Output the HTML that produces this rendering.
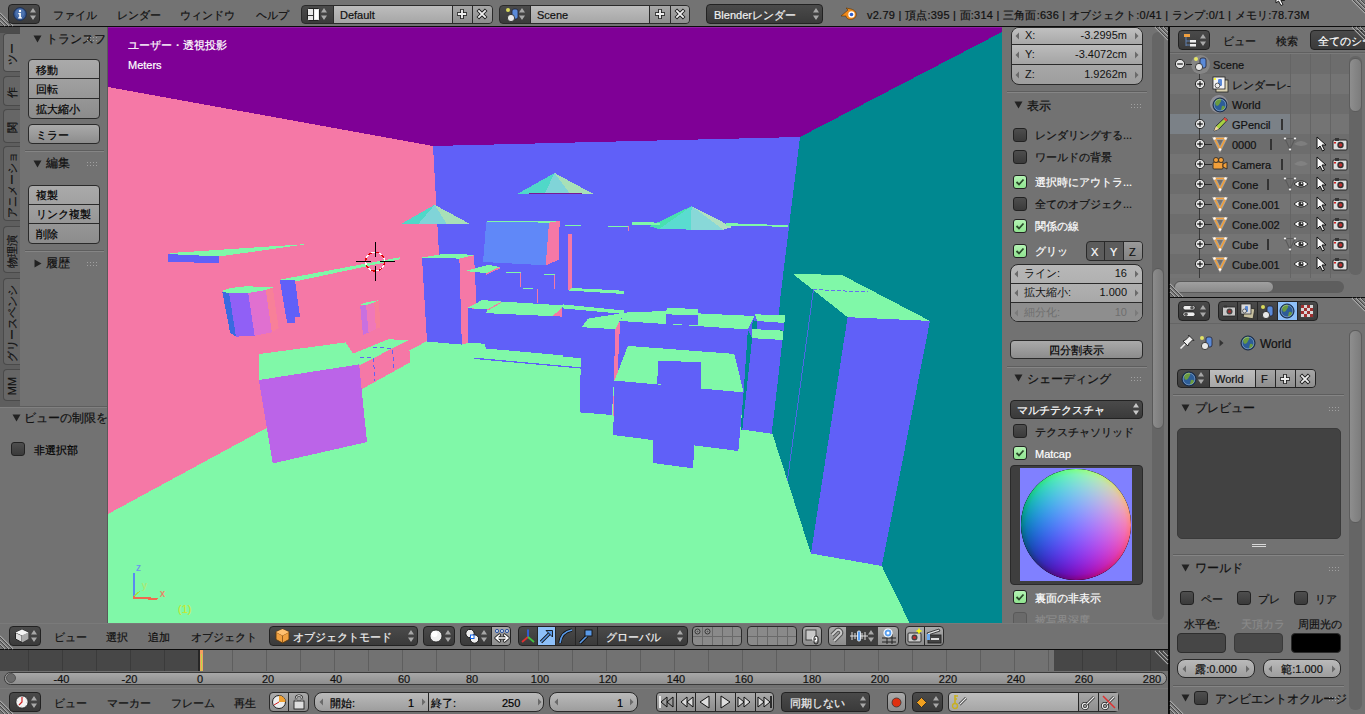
<!DOCTYPE html><html><head><meta charset="utf-8"><style>*{margin:0;padding:0;box-sizing:border-box}
html,body{-webkit-font-smoothing:antialiased;width:1365px;height:714px;overflow:hidden;background:#727272;font-family:"Liberation Sans",sans-serif;font-size:11px;color:#000}
div{position:absolute}
svg{position:absolute;overflow:visible}
.t{white-space:nowrap;line-height:13px;height:13px;margin-top:1px;-webkit-text-stroke:0.2px currentColor}
.w{color:#fff}
.btn{border:1px solid #2a2a2a;border-radius:4px;background:linear-gradient(#aaaaaa,#8c8c8c)}
.dd{border:1px solid #222;border-radius:4px;background:linear-gradient(#4a4a4a,#3a3a3a)}
.num{border:1px solid #2a2a2a;border-radius:8px;background:linear-gradient(#bababa,#9d9d9d)}
.cb{border:1px solid #222;border-radius:3px;background:linear-gradient(#4e4e4e,#3a3a3a);width:14px;height:14px}
.cbon{border:1px solid #222;border-radius:3px;background:linear-gradient(#b4f4b4,#90e490);width:14px;height:14px}
.sep{height:2px;border-top:1px solid #5e5e5e;border-bottom:1px solid #858585}
.dots{width:12px;height:6px;background-image:radial-gradient(circle,#a0a0a0 0.7px,transparent 1px);background-size:3px 3px}
</style></head><body><div class="" style="left:0px;top:0px;width:1365px;height:26px;background:#737373"></div>
<div class="" style="left:0px;top:26px;width:1365px;height:1px;background:#0c0c0c"></div>
<svg style="left:0px;top:13px;" width="13" height="13" viewBox="0 0 13 13"><path d="M0 4 L9 13 M0 8 L5 13 M0 0 L13 13" stroke="#a8a8a8" stroke-width="1.2" fill="none"/><path d="M0 5 L8 13 M0 9 L4 13 M0 1 L12 13" stroke="#3a3a3a" stroke-width="0.8" fill="none"/></svg>
<div class="dd" style="left:8px;top:4px;width:32px;height:20px;"></div>
<svg style="left:13px;top:7px;" width="14" height="14" viewBox="0 0 14 14"><circle cx="7" cy="7" r="6.3" fill="#3a5f9c" stroke="#1b2d52" stroke-width="1"/><circle cx="7" cy="6" r="4.5" fill="#5a80bc" opacity="0.6"/><circle cx="7" cy="4" r="1.2" fill="#fff"/><path d="M5.3 6h2.6v4.2h1v1.2H5.2v-1.2h1v-3h-0.9z" fill="#fff"/></svg>
<svg style="left:29px;top:7px;" width="8" height="14" viewBox="0 0 8 14"><path d="M1 5.5 L4 1 L7 5.5Z M1 8.5 L4 13 L7 8.5Z" fill="#a8a8a8"/></svg>
<div class="t" style="left:53px;top:8px;color:#111">ファイル</div>
<div class="t" style="left:117px;top:8px;color:#111">レンダー</div>
<div class="t" style="left:180px;top:8px;color:#111">ウィンドウ</div>
<div class="t" style="left:256px;top:8px;color:#111">ヘルプ</div>
<div class="" style="left:301px;top:5px;width:192px;height:19px;border:1px solid #2a2a2a;border-radius:4px;background:linear-gradient(#4a4a4a,#3a3a3a)"></div>
<div class="" style="left:333px;top:6px;width:119px;height:17px;background:linear-gradient(#bdbdbd,#a6a6a6);border-left:1px solid #2a2a2a"></div>
<div class="" style="left:452px;top:6px;width:20px;height:17px;background:linear-gradient(#a6a6a6,#8e8e8e);border-left:1px solid #2a2a2a"></div>
<div class="" style="left:472px;top:6px;width:20px;height:17px;background:linear-gradient(#a6a6a6,#8e8e8e);border-left:1px solid #2a2a2a;border-radius:0 3px 3px 0"></div>
<svg style="left:307px;top:8px;" width="13" height="13" viewBox="0 0 13 13"><rect x="0.5" y="0.5" width="12" height="12" rx="1" fill="#e8e8e8" stroke="#222"/><path d="M6.5 1v11 M1 7.5h5.5" stroke="#333" stroke-width="1"/><rect x="8" y="2" width="3" height="9" fill="#fff"/></svg>
<svg style="left:320px;top:7px;" width="8" height="14" viewBox="0 0 8 14"><path d="M1 5.5 L4 1 L7 5.5Z M1 8.5 L4 13 L7 8.5Z" fill="#a8a8a8"/></svg>
<div class="t" style="left:340px;top:8px;color:#111">Default</div>
<svg style="left:456px;top:8px;" width="12" height="12" viewBox="0 0 12 12"><path d="M6 1v10 M1 6h10" stroke="#1a1a1a" stroke-width="3.6"/><path d="M6 1.8v8.4 M1.8 6h8.4" stroke="#eee" stroke-width="1.9"/></svg>
<svg style="left:476px;top:8px;" width="12" height="12" viewBox="0 0 12 12"><path d="M1.8 1.8l8.4 8.4 M10.2 1.8l-8.4 8.4" stroke="#1a1a1a" stroke-width="3.6"/><path d="M2.3 2.3l7.4 7.4 M9.7 2.3l-7.4 7.4" stroke="#eee" stroke-width="1.9"/></svg>
<div class="" style="left:499px;top:5px;width:191px;height:19px;border:1px solid #2a2a2a;border-radius:4px;background:linear-gradient(#4a4a4a,#3a3a3a)"></div>
<div class="" style="left:530px;top:6px;width:119px;height:17px;background:linear-gradient(#bdbdbd,#a6a6a6);border-left:1px solid #2a2a2a"></div>
<div class="" style="left:649px;top:6px;width:21px;height:17px;background:linear-gradient(#a6a6a6,#8e8e8e);border-left:1px solid #2a2a2a"></div>
<div class="" style="left:670px;top:6px;width:19px;height:17px;background:linear-gradient(#a6a6a6,#8e8e8e);border-left:1px solid #2a2a2a;border-radius:0 3px 3px 0"></div>
<svg style="left:505px;top:7px;" width="16" height="16" viewBox="0 0 16 16"><circle cx="3" cy="3" r="2" fill="#ffff60" opacity="0.8"/><rect x="7" y="2" width="6" height="10" rx="2" fill="#5a8ad8" stroke="#223" stroke-width="0.8"/><circle cx="6" cy="11" r="3.6" fill="#e8e8e8" stroke="#222" stroke-width="0.8"/></svg>
<svg style="left:518px;top:7px;" width="8" height="14" viewBox="0 0 8 14"><path d="M1 5.5 L4 1 L7 5.5Z M1 8.5 L4 13 L7 8.5Z" fill="#a8a8a8"/></svg>
<div class="t" style="left:537px;top:8px;color:#111">Scene</div>
<svg style="left:654px;top:8px;" width="12" height="12" viewBox="0 0 12 12"><path d="M6 1v10 M1 6h10" stroke="#1a1a1a" stroke-width="3.6"/><path d="M6 1.8v8.4 M1.8 6h8.4" stroke="#eee" stroke-width="1.9"/></svg>
<svg style="left:674px;top:8px;" width="12" height="12" viewBox="0 0 12 12"><path d="M1.8 1.8l8.4 8.4 M10.2 1.8l-8.4 8.4" stroke="#1a1a1a" stroke-width="3.6"/><path d="M2.3 2.3l7.4 7.4 M9.7 2.3l-7.4 7.4" stroke="#eee" stroke-width="1.9"/></svg>
<div class="dd" style="left:706px;top:4px;width:117px;height:20px;"></div>
<div class="t" style="left:714px;top:8px;color:#f0f0f0">Blenderレンダー</div>
<svg style="left:812px;top:7px;" width="8" height="14" viewBox="0 0 8 14"><path d="M1 5.5 L4 1 L7 5.5Z M1 8.5 L4 13 L7 8.5Z" fill="#a8a8a8"/></svg>
<svg style="left:840px;top:7px;" width="18" height="14" viewBox="0 0 18 14"><path d="M1 9 L8 3 L6 1 L11 2 C15 3 17 6 16 9 C15 12 11 13 8 12 C6 11 6 9 6 9 Z" fill="#f08a1c" stroke="#5a3000" stroke-width="0.6"/><circle cx="11.5" cy="7.5" r="3.2" fill="#fff"/><circle cx="11.5" cy="7.5" r="1.8" fill="#2e5ec8"/></svg>
<div class="t" style="left:867px;top:8px;color:#111;letter-spacing:0.25px">v2.79 | 頂点:395 | 面:314 | 三角面:636 | オブジェクト:0/41 | ランプ:0/1 | メモリ:78.73M</div>
<svg style="left:1352px;top:0px;" width="13" height="13" viewBox="0 0 13 13"><path d="M13 9 L4 0 M13 5 L8 0 M13 13 L0 0" stroke="#a8a8a8" stroke-width="1.2" fill="none"/><path d="M13 8 L5 0 M13 4 L9 0 M13 12 L1 0" stroke="#3a3a3a" stroke-width="0.8" fill="none"/></svg>
<svg style="left:1275px;top:0px;" width="14" height="6" viewBox="0 0 14 6"><path d="M1 -6 L1 3 L3.5 1 L6 5.5 L8 4.5 L5.8 0.5 L9.5 0.5Z" fill="#fff" stroke="#111" stroke-width="0.9"/></svg>
<div class="" style="left:0px;top:27px;width:108px;height:596px;background:#727272"></div>
<div class="" style="left:0px;top:27px;width:20px;height:380px;background:#5e5e5e"></div>
<div class="" style="left:0px;top:27px;width:20px;height:6px;background:#4c4c4c"></div>
<div class="" style="left:107px;top:27px;width:1px;height:596px;background:#5a5a5a"></div>
<div class="" style="left:3px;top:33px;width:17px;height:39px;background:#747474;border:1px solid #4a4a4a;border-right:none;border-radius:4px 0 0 4px"></div>
<div class="t" style="left:11.5px;top:52.5px;transform:translate(-50%,-50%) rotate(-90deg);color:#111;font-size:11px">ツー</div>
<div class="" style="left:3px;top:76px;width:17px;height:30px;background:#666666;border:1px solid #4a4a4a;border-right:none;border-radius:4px 0 0 4px"></div>
<div class="t" style="left:11.5px;top:91.0px;transform:translate(-50%,-50%) rotate(-90deg);color:#111;font-size:11px">作</div>
<div class="" style="left:3px;top:109px;width:17px;height:34px;background:#666666;border:1px solid #4a4a4a;border-right:none;border-radius:4px 0 0 4px"></div>
<div class="t" style="left:11.5px;top:126.0px;transform:translate(-50%,-50%) rotate(-90deg);color:#111;font-size:11px">関</div>
<div class="" style="left:3px;top:146px;width:17px;height:75px;background:#666666;border:1px solid #4a4a4a;border-right:none;border-radius:4px 0 0 4px"></div>
<div class="t" style="left:11.5px;top:183.5px;transform:translate(-50%,-50%) rotate(-90deg);color:#111;font-size:11px">アニメーショ</div>
<div class="" style="left:3px;top:226px;width:17px;height:47px;background:#666666;border:1px solid #4a4a4a;border-right:none;border-radius:4px 0 0 4px"></div>
<div class="t" style="left:11.5px;top:249.5px;transform:translate(-50%,-50%) rotate(-90deg);color:#111;font-size:11px">物理演</div>
<div class="" style="left:3px;top:278px;width:17px;height:87px;background:#666666;border:1px solid #4a4a4a;border-right:none;border-radius:4px 0 0 4px"></div>
<div class="t" style="left:11.5px;top:321.5px;transform:translate(-50%,-50%) rotate(-90deg);color:#111;font-size:11px">グリースペンシ</div>
<div class="" style="left:3px;top:369px;width:17px;height:32px;background:#666666;border:1px solid #4a4a4a;border-right:none;border-radius:4px 0 0 4px"></div>
<div class="t" style="left:11.5px;top:385.0px;transform:translate(-50%,-50%) rotate(-90deg);color:#111;font-size:11px">MM</div>
<svg style="left:33px;top:35px;" width="9" height="8" viewBox="0 0 9 8"><path d="M0.5 0.5 L8.5 0.5 L4.5 7.5Z" fill="#222"/></svg>
<div class="t" style="left:46px;top:32px;color:#111;font-size:12px">トランスフ</div>
<div class="dots" style="left:86px;top:36px"></div>
<div class="btn" style="left:28px;top:59px;width:72px;height:60px;"></div>
<div class="" style="left:29px;top:78px;width:70px;height:1px;background:#2a2a2a"></div>
<div class="" style="left:29px;top:98px;width:70px;height:1px;background:#2a2a2a"></div>
<div class="t" style="left:36px;top:63px;">移動</div>
<div class="t" style="left:36px;top:82px;">回転</div>
<div class="t" style="left:36px;top:102px;">拡大縮小</div>
<div class="btn" style="left:28px;top:124px;width:72px;height:20px;"></div>
<div class="t" style="left:36px;top:128px;">ミラー</div>
<div class="sep" style="left:25px;top:150px;width:79px;height:2px;"></div>
<svg style="left:33px;top:160px;" width="9" height="8" viewBox="0 0 9 8"><path d="M0.5 0.5 L8.5 0.5 L4.5 7.5Z" fill="#222"/></svg>
<div class="t" style="left:46px;top:156px;color:#111;font-size:12px">編集</div>
<div class="dots" style="left:86px;top:161px"></div>
<div class="btn" style="left:28px;top:185px;width:72px;height:59px;"></div>
<div class="" style="left:29px;top:204px;width:70px;height:1px;background:#2a2a2a"></div>
<div class="" style="left:29px;top:223px;width:70px;height:1px;background:#2a2a2a"></div>
<div class="t" style="left:36px;top:188px;">複製</div>
<div class="t" style="left:36px;top:207px;">リンク複製</div>
<div class="t" style="left:36px;top:227px;">削除</div>
<div class="sep" style="left:25px;top:250px;width:79px;height:2px;"></div>
<svg style="left:34px;top:259px;" width="8" height="9" viewBox="0 0 8 9"><path d="M0.5 0.5 L7.5 4.5 L0.5 8.5Z" fill="#222"/></svg>
<div class="t" style="left:46px;top:256px;color:#111;font-size:12px">履歴</div>
<div class="dots" style="left:86px;top:261px"></div>
<div class="" style="left:0px;top:406px;width:107px;height:1px;background:#5e5e5e"></div>
<div class="" style="left:0px;top:407px;width:107px;height:1px;background:#808080"></div>
<svg style="left:12px;top:414px;" width="9" height="8" viewBox="0 0 9 8"><path d="M0.5 0.5 L8.5 0.5 L4.5 7.5Z" fill="#222"/></svg>
<div class="t" style="left:24px;top:411px;color:#111;font-size:12px">ビューの制限を</div>
<div class="cb" style="left:11px;top:442px;width:14px;height:14px;"></div>
<div class="t" style="left:34px;top:443px;">非選択部</div>
<svg style="left:0px;top:0px;" width="1365" height="714" viewBox="0 0 1365 714"><defs><clipPath id="vc"><rect x="108" y="27" width="894" height="596"/></clipPath></defs><g clip-path="url(#vc)" shape-rendering="crispEdges"><polygon points="108,27 1002,27 1002,32 800,137 433,146 108,87" fill="#7f0096" /><polygon points="108,87 433,146 444,343 108,514" fill="#f578a6" /><polygon points="433,146 800,137 780,300 772,432 620,345 444,343" fill="#6060f8" /><polygon points="800,137 1002,32 1002,623 909.6,623 881.8,566 810.9,553.5 771.5,431 780,300" fill="#008890" /><polygon points="108,514 427,341 620,345 771.5,431 810.9,553.5 881.8,566 909.6,623 108,623" fill="#80f8a8" /><polygon points="434.7,204.8 401,224 418,224.3" fill="#50d8c8" /><polygon points="434.7,204.8 418,224.3 447,224.3" fill="#80d4d8" /><polygon points="434.7,204.8 447,224.3 470,224" fill="#a8e0b8" /><polygon points="554.6,173 518,193.6 544.5,193.9" fill="#50d8c8" /><polygon points="554.6,173 544.5,193.9 570.3,193.9" fill="#80d4d8" /><polygon points="554.6,173 570.3,193.9 592.7,193.6" fill="#a8e0b8" /><polygon points="691.6,206.1 649.4,226.4 659.3,229" fill="#48e0b0" /><polygon points="691.6,206.1 659.3,229 691,229.6" fill="#5adcd0" /><polygon points="691.6,206.1 691,229.6 723.2,229.6" fill="#88d8d8" /><polygon points="691.6,206.1 723.2,229.6 732.6,227.2" fill="#b0e0c0" /><polygon points="632,222.2 660,222.6 660,224.9 632,224.9" fill="#80f8a8" /><polygon points="725.6,223.1 787.7,225.2 787.7,226.8 725.6,225.6" fill="#80f8a8" /><polygon points="490,220.5 559.6,220.8 549,222.7 486.3,221.6" fill="#80f8a8" /><polygon points="486.3,221.6 549,222.7 545.7,265.3 483,262" fill="#6088f8" /><polygon points="549,222.7 559.6,221 559,259.7 545.7,265.3" fill="#f578a6" /><polygon points="568.2,234 571.8,234 571.8,288 568.2,290.5" fill="#f578a6" /><polygon points="568.7,290.5 571.8,288 578,288.3 598.5,289.3 624.1,290.8 624.1,293.9 617,293.6 598.5,292.4" fill="#80f8a8" /><polygon points="422,257.5 442.6,254 471.7,254.6 474,255.2 459.4,258.6" fill="#80f8a8" /><polygon points="459.4,258.6 474,255.2 477.3,320 477,341 461.8,344.6" fill="#f578a6" /><polygon points="422,257.5 459.4,258.6 461.8,344.6 427,341.5" fill="#6060f8" /><polygon points="465,271 488.5,264.9 499.7,267 486.3,273.2" fill="#80f8a8" /><polygon points="486.3,273.2 499.7,267 499.7,268.5 486.3,274.8" fill="#f578a6" /><polygon points="564.5,224.6 581,224.9 581,226 564.5,225.7" fill="#80f8a8" /><polygon points="529,193.2 582,193.2 582,194.2 529,194.2" fill="#7a1a90" /><polygon points="506.2,271.8 520.5,271.8 520.5,273 506.2,273" fill="#80f8a8" /><polygon points="520,273 521,273 521,287 520,287" fill="#f578a6" /><polygon points="544.1,273.8 555,273.8 555,275 544.1,275" fill="#80f8a8" /><polygon points="554,275 555,275 555,289 554,289" fill="#f578a6" /><polygon points="523,288 533,288 533,289.2 523,289.2" fill="#80f8a8" /><polygon points="537,289 538,289 538,302.8 537,302.8" fill="#f578a6" /><polygon points="608.4,225.6 628.6,226.2 628.6,227.4 608.4,226.8" fill="#80f8a8" /><polygon points="628,226 629,226 629,230.6 628,230.6" fill="#f578a6" /><polygon points="563,305 624,311 623,360 563,357" fill="#6060f8" /><polygon points="563,304.4 624,310.5 624,314 563,308.4" fill="#80f8a8" /><polygon points="467.5,308.1 561.8,316.6 581,321 581,357 486.3,348.5 484.3,343.8 468.2,342.5" fill="#6060f8" /><polygon points="467.7,307.7 482.3,300 500.8,301.5 563.8,305.4 561.5,308.5 553,316.2 485.4,313.1 488.5,309.2 467.7,308.2" fill="#80f8a8" /><polygon points="487.5,309.5 500.5,302 501.2,302.8 488.5,310.2" fill="#f578a6" /><polygon points="552.6,316 561.8,308.1 561.8,316.6" fill="#f578a6" /><polygon points="473.7,357.6 580.6,367.3 580.6,368.6 473.7,358.9" fill="#6060f8" /><polygon points="581.3,316.6 617.2,321.9 611.9,415 580,412.4" fill="#6060f8" /><polygon points="581.6,327.2 588.2,318.6 625.1,312.7 619.2,321.9 615.2,329.2" fill="#80f8a8" /><polygon points="615.2,329.2 619.8,321 618,415 613,416" fill="#f578a6" /><polygon points="620.2,321 625.2,312.6 666.4,310.9 667.2,307.6 698.3,309.2 698.3,313.4 754.6,316 747.9,329.4" fill="#80f8a8" /><polygon points="620.2,321 747.9,329.4 743.6,392 617.2,380" fill="#6060f8" /><polygon points="666.4,314.3 698.3,315.5 698.3,325.5 666.4,323.5" fill="#6060f8" /><polygon points="627.9,345.9 734.3,353.9 743.6,392.4 614.5,380.5" fill="#80f8a8" /><polygon points="614.5,380.5 743.6,392.4 738.3,451 613.2,435" fill="#6060f8" /><polygon points="658.5,360.5 701,362.4 701,390 657,384" fill="#6060f8" /><polygon points="653,435 694.4,445 693,468.3 653,463" fill="#6060f8" /><polygon points="747.9,329.4 752.2,338.2 742.6,430 740.5,430 743.6,392" fill="#008890" /><polygon points="752.9,320.3 757.1,321 757,328.7 751.5,329" fill="#008890" /><polygon points="755,314.4 786.5,315 785.8,323.1 757.1,321" fill="#80f8a8" /><polygon points="757.1,321 785.8,323.1 785.8,330.8 757.1,328.7" fill="#6060f8" /><polygon points="751.5,329 785.1,330.8 783.7,340 752.2,338.2" fill="#80f8a8" /><polygon points="752.2,338.2 783.7,340 771.5,433.7 742.3,429.5" fill="#6060f8" /><polygon points="792.5,273.6 842.4,275.2 930,320.9 847.6,317.2" fill="#80f8a8" /><polygon points="792.5,273.6 847.6,317.2 810.9,553.5 772,432 787,300" fill="#008890" /><polygon points="847.6,317.2 930,320.9 881.8,566 810.9,553.5" fill="#6060f8" /><line x1="813.5" y1="289.4" x2="787.3" y2="481" stroke="#6060f8" stroke-width="0.8"/><line x1="813.5" y1="289.6" x2="868" y2="292" stroke="#6060f8" stroke-width="0.9" stroke-dasharray="4 2"/><polygon points="174,252.8 307.5,244 219.3,256.5 167.6,254" fill="#80f8a8" /><polygon points="167.6,254 219.3,256.5 219.3,263.4 167.6,261.6" fill="#6060f8" /><polygon points="279.8,279.7 399.6,257.3 399.6,259.3 295,281.5" fill="#80f8a8" /><polygon points="279.8,279.7 295,280 300,317 295,317 295,322.8 287.4,322.8 286,317" fill="#6060f8" /><polygon points="221.8,291.1 229.6,288.1 246.3,286.2 272.7,287.5 265.9,290.1 248.2,293 226.2,293" fill="#80f8a8" /><polygon points="222.3,292 229.1,293 236,336.7 230.1,332.7" fill="#3a6ae0" /><polygon points="229.1,293 248.2,293 254.6,335.7 236,336.7" fill="#9060f6" /><polygon points="248.2,293 265.9,290.1 271.8,332.3 254.6,335.7" fill="#e070d0" /><polygon points="265.9,290.1 272.7,287.5 278.6,327.8 271.8,332.3" fill="#f88098" /><polygon points="360.2,305 366.1,302.3 378.7,300.2 374.2,302.3 366.1,305" fill="#80f8a8" /><polygon points="360.2,306.1 366.1,305 368.6,332.7 363,334.8" fill="#c870e0" /><polygon points="366.1,305 374.2,302.3 375.9,329.2 368.6,332.7" fill="#f078b8" /><polygon points="374.2,302.3 378.7,300.2 380.5,327.1 375.9,329.2" fill="#f88098" /><polygon points="354.6,355.9 388.2,339.7 407.3,340.6 409.5,351.4 409.5,362.6 361.3,389.5 359.1,364.4" fill="#f578a6" /><polygon points="352.2,354 388.7,339.1 407.8,340.5 359.1,365.5" fill="#80f8a8" /><g stroke="#6060f8" stroke-width="1" stroke-dasharray="4 3" fill="none"><path d="M360 357.3 L373.7 358.2 L374.5 381 M373.2 347.7 L392.8 348.2 L393.5 370"/></g><polygon points="258.9,354.1 345.7,342.4 354.6,355.9 359.1,364.4 258.9,380" fill="#80f8a8" /><polygon points="258.9,380 359.1,364.4 367,442.1 272.8,463.4" fill="#bb64e8" /><circle cx="375.1" cy="261.6" r="9.5" fill="none" stroke="#fff" stroke-width="1.3"/><circle cx="375.1" cy="261.6" r="9.5" fill="none" stroke="#e00000" stroke-width="1.3" stroke-dasharray="3.7 3.7"/><line x1="375.1" y1="242" x2="375.1" y2="257" stroke="#000" stroke-width="1.2"/><line x1="375.1" y1="266" x2="375.1" y2="281" stroke="#000" stroke-width="1.2"/><line x1="355.5" y1="261.6" x2="370.5" y2="261.6" stroke="#000" stroke-width="1.2"/><line x1="379.7" y1="261.6" x2="394.7" y2="261.6" stroke="#000" stroke-width="1.2"/><line x1="134" y1="573" x2="134" y2="597" stroke="#5a8af0" stroke-width="2"/><line x1="133" y1="597.5" x2="157.5" y2="599" stroke="#f06a50" stroke-width="2.2"/><line x1="134.5" y1="596" x2="140" y2="591" stroke="#a0e040" stroke-width="1.2"/></g></svg>
<div class="t" style="left:136px;top:560px;color:#6a90f0;font-size:10px">z</div>
<div class="t" style="left:142px;top:578px;color:#b0e870;font-size:10px">y</div>
<div class="t" style="left:160px;top:586px;color:#f07a60;font-size:10px">x</div>
<div class="t" style="left:178px;top:601.5px;color:#c8e830;font-size:11px">(1)</div>
<div class="t" style="left:128px;top:38px;color:#fff">ユーザー・透視投影</div>
<div class="t" style="left:128px;top:58px;color:#fff">Meters</div>
<div class="" style="left:108px;top:27px;width:894px;height:1px;background:rgba(255,255,255,0.12)"></div>
<div class="" style="left:1002px;top:27px;width:166px;height:596px;background:#727272"></div>
<div class="" style="left:1152px;top:32px;width:12px;height:588px;background:#656565;border-radius:6px"></div>
<div class="" style="left:1152px;top:268px;width:12px;height:161px;background:linear-gradient(90deg,#8c8c8c,#7a7a7a);border-radius:6px;border:1px solid #5a5a5a"></div>
<svg style="left:1155px;top:27px;" width="13" height="13" viewBox="0 0 13 13"><path d="M13 9 L4 0 M13 5 L8 0 M13 13 L0 0" stroke="#a8a8a8" stroke-width="1.2" fill="none"/><path d="M13 8 L5 0 M13 4 L9 0 M13 12 L1 0" stroke="#3a3a3a" stroke-width="0.8" fill="none"/></svg>
<div class="" style="left:1011px;top:27px;width:132px;height:58px;border:1px solid #2a2a2a;border-radius:8px;background:linear-gradient(#bababa,#9e9e9e)"></div>
<div class="" style="left:1012px;top:44px;width:130px;height:1px;background:#2a2a2a"></div>
<div class="" style="left:1012px;top:64px;width:130px;height:1px;background:#2a2a2a"></div>
<div class="" style="left:1012px;top:28px;width:130px;height:16px;background:linear-gradient(#c0c0c0,#a8a8a8);border-radius:7px 7px 0 0"></div>
<div class="" style="left:1012px;top:45px;width:130px;height:19px;background:linear-gradient(#bcbcbc,#a4a4a4)"></div>
<div style="left:1011px;top:27px;width:132px;height:17px;line-height:17px;color:#111;padding:0 14px"><span style="position:absolute;left:14px">X:</span><span style="position:absolute;right:16px">-3.2995m</span></div>
<svg style="left:1015px;top:31.5px;" width="5" height="8" viewBox="0 0 5 8"><path d="M4 0.5 L0.5 4 L4 7.5Z" fill="#6a6a6a"/></svg>
<svg style="left:1134px;top:31.5px;" width="5" height="8" viewBox="0 0 5 8"><path d="M1 0.5 L4.5 4 L1 7.5Z" fill="#6a6a6a"/></svg>
<div style="left:1011px;top:45px;width:132px;height:19px;line-height:19px;color:#111;padding:0 14px"><span style="position:absolute;left:14px">Y:</span><span style="position:absolute;right:16px">-3.4072cm</span></div>
<svg style="left:1015px;top:50.5px;" width="5" height="8" viewBox="0 0 5 8"><path d="M4 0.5 L0.5 4 L4 7.5Z" fill="#6a6a6a"/></svg>
<svg style="left:1134px;top:50.5px;" width="5" height="8" viewBox="0 0 5 8"><path d="M1 0.5 L4.5 4 L1 7.5Z" fill="#6a6a6a"/></svg>
<div style="left:1011px;top:65px;width:132px;height:19px;line-height:19px;color:#111;padding:0 14px"><span style="position:absolute;left:14px">Z:</span><span style="position:absolute;right:16px">1.9262m</span></div>
<svg style="left:1015px;top:70.5px;" width="5" height="8" viewBox="0 0 5 8"><path d="M4 0.5 L0.5 4 L4 7.5Z" fill="#6a6a6a"/></svg>
<svg style="left:1134px;top:70.5px;" width="5" height="8" viewBox="0 0 5 8"><path d="M1 0.5 L4.5 4 L1 7.5Z" fill="#6a6a6a"/></svg>
<div class="sep" style="left:1007px;top:91px;width:140px;height:2px;"></div>
<svg style="left:1014px;top:101px;" width="9" height="8" viewBox="0 0 9 8"><path d="M0.5 0.5 L8.5 0.5 L4.5 7.5Z" fill="#222"/></svg>
<div class="t" style="left:1027px;top:99px;color:#111;font-size:12px">表示</div>
<div class="dots" style="left:1130px;top:103px"></div>
<div class="cb" style="left:1013px;top:128px;width:14px;height:14px;"></div>
<div class="t" style="left:1035px;top:128px;color:#111">レンダリングする...</div>
<div class="cb" style="left:1013px;top:150px;width:14px;height:14px;"></div>
<div class="t" style="left:1035px;top:150px;color:#111">ワールドの背景</div>
<div class="cbon" style="left:1013px;top:175px;width:14px;height:14px;"></div>
<svg style="left:1015px;top:177px;" width="10" height="10" viewBox="0 0 10 10"><path d="M1.5 5 L4 7.5 L8.5 2.5" stroke="#2a4a2a" stroke-width="1.8" fill="none"/></svg>
<div class="t" style="left:1035px;top:175px;color:#fff">選択時にアウトラ...</div>
<div class="cb" style="left:1013px;top:197px;width:14px;height:14px;"></div>
<div class="t" style="left:1035px;top:197px;color:#111">全てのオブジェク...</div>
<div class="cbon" style="left:1013px;top:219px;width:14px;height:14px;"></div>
<svg style="left:1015px;top:221px;" width="10" height="10" viewBox="0 0 10 10"><path d="M1.5 5 L4 7.5 L8.5 2.5" stroke="#2a4a2a" stroke-width="1.8" fill="none"/></svg>
<div class="t" style="left:1035px;top:219px;color:#fff">関係の線</div>
<div class="cbon" style="left:1013px;top:244px;width:14px;height:14px;"></div>
<svg style="left:1015px;top:246px;" width="10" height="10" viewBox="0 0 10 10"><path d="M1.5 5 L4 7.5 L8.5 2.5" stroke="#2a4a2a" stroke-width="1.8" fill="none"/></svg>
<div class="t" style="left:1035px;top:244px;color:#fff">グリッ</div>
<div class="" style="left:1086px;top:241px;width:57px;height:20px;border:1px solid #2a2a2a;border-radius:4px;background:#5c5c5c;overflow:hidden"></div>
<div class="" style="left:1104px;top:242px;width:1px;height:18px;background:#2a2a2a"></div>
<div class="" style="left:1123px;top:242px;width:1px;height:18px;background:#2a2a2a"></div>
<div class="" style="left:1124px;top:242px;width:18px;height:18px;background:linear-gradient(#9a9a9a,#828282);border-radius:0 3px 3px 0"></div>
<div class="t" style="left:1091px;top:245px;color:#fff">X</div>
<div class="t" style="left:1110px;top:245px;color:#fff">Y</div>
<div class="t" style="left:1129px;top:245px;color:#111">Z</div>
<div class="" style="left:1010px;top:264px;width:133px;height:58px;border:1px solid #2a2a2a;border-radius:8px;background:linear-gradient(#b8b8b8,#a0a0a0)"></div>
<div class="" style="left:1011px;top:283px;width:131px;height:1px;background:#2a2a2a"></div>
<div class="" style="left:1011px;top:302px;width:131px;height:1px;background:#2a2a2a"></div>
<div class="" style="left:1011px;top:303px;width:131px;height:18px;background:#8e8e8e;border-radius:0 0 7px 7px"></div>
<div style="left:1010px;top:264px;width:133px;height:19px;line-height:19px;color:#111;padding:0 14px"><span style="position:absolute;left:14px">ライン:</span><span style="position:absolute;right:16px">16</span></div>
<svg style="left:1014px;top:269.5px;" width="5" height="8" viewBox="0 0 5 8"><path d="M4 0.5 L0.5 4 L4 7.5Z" fill="#6a6a6a"/></svg>
<svg style="left:1134px;top:269.5px;" width="5" height="8" viewBox="0 0 5 8"><path d="M1 0.5 L4.5 4 L1 7.5Z" fill="#6a6a6a"/></svg>
<div style="left:1010px;top:283px;width:133px;height:19px;line-height:19px;color:#111;padding:0 14px"><span style="position:absolute;left:14px">拡大縮小:</span><span style="position:absolute;right:16px">1.000</span></div>
<svg style="left:1014px;top:288.5px;" width="5" height="8" viewBox="0 0 5 8"><path d="M4 0.5 L0.5 4 L4 7.5Z" fill="#6a6a6a"/></svg>
<svg style="left:1134px;top:288.5px;" width="5" height="8" viewBox="0 0 5 8"><path d="M1 0.5 L4.5 4 L1 7.5Z" fill="#6a6a6a"/></svg>
<div style="left:1010px;top:303px;width:133px;height:19px;line-height:19px;color:#6e6e6e;padding:0 14px"><span style="position:absolute;left:14px">細分化:</span><span style="position:absolute;right:16px">10</span></div>
<svg style="left:1014px;top:308.5px;" width="5" height="8" viewBox="0 0 5 8"><path d="M4 0.5 L0.5 4 L4 7.5Z" fill="#7a7a7a"/></svg>
<svg style="left:1134px;top:308.5px;" width="5" height="8" viewBox="0 0 5 8"><path d="M1 0.5 L4.5 4 L1 7.5Z" fill="#7a7a7a"/></svg>
<div class="btn" style="left:1010px;top:340px;width:133px;height:19px;"></div>
<div class="t" style="left:1010px;top:343px;width:133px;text-align:center">四分割表示</div>
<div class="sep" style="left:1007px;top:366px;width:140px;height:2px;"></div>
<svg style="left:1014px;top:374px;" width="9" height="8" viewBox="0 0 9 8"><path d="M0.5 0.5 L8.5 0.5 L4.5 7.5Z" fill="#222"/></svg>
<div class="t" style="left:1027px;top:372px;color:#111;font-size:12px">シェーディング</div>
<div class="dots" style="left:1130px;top:376px"></div>
<div class="dd" style="left:1010px;top:400px;width:133px;height:19px;"></div>
<div class="t" style="left:1017px;top:403px;color:#fff">マルチテクスチャ</div>
<svg style="left:1132px;top:402px;" width="8" height="14" viewBox="0 0 8 14"><path d="M1 5.5 L4 1 L7 5.5Z M1 8.5 L4 13 L7 8.5Z" fill="#c8c8c8"/></svg>
<div class="cb" style="left:1013px;top:424px;width:14px;height:14px;"></div>
<div class="t" style="left:1035px;top:425px;color:#111">テクスチャソリッド</div>
<div class="cbon" style="left:1013px;top:446px;width:14px;height:14px;"></div>
<svg style="left:1015px;top:448px;" width="10" height="10" viewBox="0 0 10 10"><path d="M1.5 5 L4 7.5 L8.5 2.5" stroke="#2a4a2a" stroke-width="1.8" fill="none"/></svg>
<div class="t" style="left:1035px;top:447px;color:#fff">Matcap</div>
<div class="" style="left:1010px;top:465px;width:133px;height:120px;background:#3e3e3e;border:1px solid #2a2a2a;border-radius:4px"></div>
<div class="" style="left:1020px;top:468px;width:112px;height:113px;background:#8080ff"></div>
<div style="left:1021px;top:469px;width:110px;height:111px;isolation:isolate;border-radius:50%;overflow:hidden"><div style="left:0;top:0;width:110px;height:111px;background:radial-gradient(closest-side,rgb(0,0,255) 0%,rgb(0,0,254) 10%,rgb(0,0,252) 20%,rgb(0,0,249) 30%,rgb(0,0,244) 40%,rgb(0,0,238) 50%,rgb(0,0,230) 60%,rgb(0,0,219) 70%,rgb(0,0,204) 80%,rgb(0,0,183) 90%,rgb(0,0,128) 100%)"></div><div style="left:0;top:0;width:110px;height:111px;background:linear-gradient(90deg,rgb(1,0,0),rgb(255,0,0));mix-blend-mode:lighten"></div><div style="left:0;top:0;width:110px;height:111px;background:linear-gradient(180deg,rgb(0,255,0),rgb(0,1,0));mix-blend-mode:lighten"></div></div>
<div class="cbon" style="left:1013px;top:590px;width:14px;height:14px;"></div>
<svg style="left:1015px;top:592px;" width="10" height="10" viewBox="0 0 10 10"><path d="M1.5 5 L4 7.5 L8.5 2.5" stroke="#2a4a2a" stroke-width="1.8" fill="none"/></svg>
<div class="t" style="left:1035px;top:591px;color:#fff">裏面の非表示</div>
<div class="" style="left:1013px;top:612px;width:14px;height:14px;border:1px solid #5a5a5a;border-radius:3px;background:#6a6a6a"></div>
<div class="t" style="left:1035px;top:613px;color:#8c8c8c">被写界深度</div>
<div class="" style="left:1168px;top:27px;width:2px;height:687px;background:#0c0c0c"></div>
<div class="" style="left:1170px;top:27px;width:195px;height:270px;background:#727272"></div>
<div class="" style="left:1170px;top:52px;width:195px;height:1px;background:#606060"></div>
<div class="" style="left:1170px;top:53px;width:195px;height:1px;background:#7a7a7a"></div>
<div class="" style="left:1170px;top:54px;width:180px;height:20px;background:#6d6d6d"></div>
<div class="" style="left:1170px;top:74px;width:180px;height:20px;background:#747474"></div>
<div class="" style="left:1170px;top:94px;width:180px;height:20px;background:#6d6d6d"></div>
<div class="" style="left:1170px;top:114px;width:180px;height:20px;background:#747474"></div>
<div class="" style="left:1170px;top:134px;width:180px;height:20px;background:#6d6d6d"></div>
<div class="" style="left:1170px;top:154px;width:180px;height:20px;background:#747474"></div>
<div class="" style="left:1170px;top:174px;width:180px;height:20px;background:#6d6d6d"></div>
<div class="" style="left:1170px;top:194px;width:180px;height:20px;background:#747474"></div>
<div class="" style="left:1170px;top:214px;width:180px;height:20px;background:#6d6d6d"></div>
<div class="" style="left:1170px;top:234px;width:180px;height:20px;background:#747474"></div>
<div class="" style="left:1170px;top:254px;width:180px;height:20px;background:#6d6d6d"></div>
<div class="" style="left:1170px;top:274px;width:180px;height:20px;background:#747474"></div>
<div class="" style="left:1170px;top:114px;width:121px;height:20px;background:#7b8187"></div>
<div class="" style="left:1290px;top:54px;width:1px;height:226px;background:#656565"></div>
<div class="" style="left:1310px;top:54px;width:1px;height:226px;background:#656565"></div>
<div class="" style="left:1330px;top:54px;width:1px;height:226px;background:#656565"></div>
<div class="dd" style="left:1178px;top:30px;width:32px;height:20px;"></div>
<svg style="left:1183px;top:33px;" width="16" height="14" viewBox="0 0 16 14"><rect x="1" y="1" width="6" height="3" fill="#f0a040"/><path d="M3 4v9 M3 8h4 M3 12h4" stroke="#6080b0" stroke-width="1"/><rect x="7" y="7" width="6" height="2.5" fill="#eee"/><rect x="7" y="11" width="6" height="2.5" fill="#eee"/></svg>
<svg style="left:1199px;top:33px;" width="8" height="14" viewBox="0 0 8 14"><path d="M1 5.5 L4 1 L7 5.5Z M1 8.5 L4 13 L7 8.5Z" fill="#a8a8a8"/></svg>
<div class="t" style="left:1223px;top:34px;color:#111">ビュー</div>
<div class="t" style="left:1276px;top:34px;color:#111">検索</div>
<div class="dd" style="left:1310px;top:30px;width:60px;height:20px;"></div>
<div class="t" style="left:1318px;top:34px;color:#fff">全てのシーン</div>
<svg style="left:1352px;top:27px;" width="13" height="13" viewBox="0 0 13 13"><path d="M13 9 L4 0 M13 5 L8 0 M13 13 L0 0" stroke="#a8a8a8" stroke-width="1.2" fill="none"/><path d="M13 8 L5 0 M13 4 L9 0 M13 12 L1 0" stroke="#3a3a3a" stroke-width="0.8" fill="none"/></svg>
<div class="" style="left:1199px;top:74px;width:1px;height:212px;background:#3a3a3a"></div>
<svg style="left:1173.5px;top:58px;" width="12" height="12" viewBox="0 0 12 12"><circle cx="6" cy="6" r="4.6" fill="#e4e4e4" stroke="#1a1a1a" stroke-width="0.9"/><path d="M3.2 6h5.6" stroke="#111" stroke-width="1.2"/></svg>
<div class="" style="left:1191px;top:55px;width:19px;height:19px;background:#9a9a9a;border-radius:50%;opacity:0.55"></div>
<svg style="left:1193px;top:56px;" width="16" height="16" viewBox="0 0 16 16"><circle cx="3" cy="3" r="2" fill="#ffff60" opacity="0.8"/><rect x="7" y="2" width="6" height="10" rx="2" fill="#5a8ad8" stroke="#223" stroke-width="0.8"/><circle cx="6" cy="11" r="3.6" fill="#e8e8e8" stroke="#222" stroke-width="0.8"/></svg>
<div class="t" style="left:1213px;top:58px;color:#111">Scene</div>
<div class="" style="left:1186px;top:64px;width:6px;height:1px;background:#222"></div>
<svg style="left:1193.5px;top:78px;" width="12" height="12" viewBox="0 0 12 12"><circle cx="6" cy="6" r="4.6" fill="#e4e4e4" stroke="#1a1a1a" stroke-width="0.9"/><path d="M3.2 6h5.6" stroke="#111" stroke-width="1.2"/><path d="M6 3.2v5.6" stroke="#111" stroke-width="1.2"/></svg>
<svg style="left:1212px;top:76px;" width="17" height="17" viewBox="0 0 17 17"><rect x="4" y="4" width="12" height="12" fill="#d8d0b0" stroke="#222" stroke-width="0.8"/><rect x="1" y="1" width="12" height="12" fill="#f4f4f4" stroke="#222" stroke-width="0.8"/><rect x="6" y="3" width="4" height="7" rx="1.2" fill="#5a8ad8"/><circle cx="5.5" cy="9.5" r="2.4" fill="#eee" stroke="#222" stroke-width="0.7"/><circle cx="3" cy="3" r="1" fill="#ff0"/></svg>
<div class="t" style="left:1232px;top:78px;color:#111">レンダーレ-</div>
<div class="" style="left:1210px;top:95px;width:18px;height:18px;background:#a6a6b6;border-radius:50%;opacity:0.6"></div>
<svg style="left:1212px;top:97px;" width="16" height="16" viewBox="0 0 16 16"><circle cx="8" cy="8" r="7" fill="#2d5d98" stroke="#16243c" stroke-width="1"/><path d="M3 5 q2 -4 6 -3 q1 2 -1 4 q-1 3 -3 3 q-2 -1 -2 -4z M10 9 q3 -1 3 2 q-2 3 -4 2z" fill="#6a9a40"/><circle cx="8" cy="8" r="5.8" fill="none" stroke="#fff" stroke-width="0.8" opacity="0.35"/></svg>
<div class="t" style="left:1232px;top:98px;color:#111">World</div>
<svg style="left:1193.5px;top:118px;" width="12" height="12" viewBox="0 0 12 12"><circle cx="6" cy="6" r="4.6" fill="#e4e4e4" stroke="#1a1a1a" stroke-width="0.9"/><path d="M3.2 6h5.6" stroke="#111" stroke-width="1.2"/><path d="M6 3.2v5.6" stroke="#111" stroke-width="1.2"/></svg>
<svg style="left:1212px;top:116px;" width="17" height="17" viewBox="0 0 17 17"><path d="M2 15 L4 10 L13 1.5 L15.5 4 L7 13Z" fill="#a8d040" stroke="#223" stroke-width="0.9"/><path d="M13 1.5 L15.5 4 L14 5.5 L11.5 3Z" fill="#e04040"/><path d="M2 15 L4 10 L7 13Z" fill="#f0d8a0"/></svg>
<div class="t" style="left:1232px;top:118px;color:#111">GPencil</div>
<div class="" style="left:1281px;top:119px;width:2px;height:11px;background:#333"></div>
<svg style="left:1193.5px;top:138px;" width="12" height="12" viewBox="0 0 12 12"><circle cx="6" cy="6" r="4.6" fill="#e4e4e4" stroke="#1a1a1a" stroke-width="0.9"/><path d="M3.2 6h5.6" stroke="#111" stroke-width="1.2"/><path d="M6 3.2v5.6" stroke="#111" stroke-width="1.2"/></svg>
<div class="" style="left:1204px;top:144px;width:8px;height:1px;background:#2a2a2a"></div>
<svg style="left:1212px;top:136px;" width="16" height="16" viewBox="0 0 16 16"><path d="M2.5 2.5 L13.5 2.5 L8 13.5Z" fill="none" stroke="#ffffff" stroke-width="3.2" opacity="0.35"/><path d="M2.5 2.5 L13.5 2.5 L8 13.5Z" fill="none" stroke="#f29f3a" stroke-width="1.6"/><circle cx="2.5" cy="2.5" r="1.3" fill="#fff"/><circle cx="13.5" cy="2.5" r="1.3" fill="#fff"/><circle cx="8" cy="13.5" r="1.3" fill="#fff"/></svg>
<div class="t" style="left:1232px;top:138px;color:#111">0000</div>
<div class="" style="left:1270px;top:139px;width:2px;height:11px;background:#333"></div>
<svg style="left:1283px;top:136px;" width="14" height="16" viewBox="0 0 14 16"><path d="M2 2.5 L12 2.5 L7 13.5Z" fill="none" stroke="#5a5a5a" stroke-width="1.1"/><circle cx="2" cy="2.5" r="1.4" fill="#fff" stroke="#333" stroke-width="0.5"/><circle cx="12" cy="2.5" r="1.4" fill="#fff" stroke="#333" stroke-width="0.5"/><circle cx="7" cy="13.5" r="1.4" fill="#fff" stroke="#333" stroke-width="0.5"/></svg>
<svg style="left:1293px;top:139px;" width="16" height="10" viewBox="0 0 16 10"><path d="M1 5 Q8 -1 15 5 Q8 9 1 5Z" fill="#8a8a8a" opacity="0.6"/></svg>
<svg style="left:1315px;top:136px;" width="12" height="16" viewBox="0 0 12 16"><path d="M2 1 L2 13 L5 10 L7.5 15 L9.5 14 L7 9 L11 9Z" fill="#f4f4f4" stroke="#111" stroke-width="1"/></svg>
<svg style="left:1332px;top:137px;" width="16" height="14" viewBox="0 0 16 14"><rect x="1" y="3" width="14" height="10" rx="1" fill="#e0e0e0" stroke="#222" stroke-width="1"/><rect x="3" y="1" width="4" height="3" fill="#333"/><circle cx="8.5" cy="8" r="3.2" fill="#333"/><circle cx="8.5" cy="8" r="1.8" fill="#c03030"/><rect x="2" y="5" width="2" height="1.5" fill="#d02020"/></svg>
<svg style="left:1193.5px;top:158px;" width="12" height="12" viewBox="0 0 12 12"><circle cx="6" cy="6" r="4.6" fill="#e4e4e4" stroke="#1a1a1a" stroke-width="0.9"/><path d="M3.2 6h5.6" stroke="#111" stroke-width="1.2"/><path d="M6 3.2v5.6" stroke="#111" stroke-width="1.2"/></svg>
<div class="" style="left:1204px;top:164px;width:8px;height:1px;background:#2a2a2a"></div>
<svg style="left:1212px;top:156px;" width="17" height="16" viewBox="0 0 17 16"><rect x="1" y="6" width="10" height="7" rx="1" fill="#f29f3a" stroke="#222" stroke-width="0.8"/><circle cx="4" cy="4" r="2.5" fill="#f29f3a" stroke="#222" stroke-width="0.8"/><circle cx="9" cy="4" r="2.5" fill="#f29f3a" stroke="#222" stroke-width="0.8"/><path d="M11 8 L15 6 L15 13 L11 11Z" fill="#f29f3a" stroke="#222" stroke-width="0.8"/></svg>
<div class="t" style="left:1232px;top:158px;color:#111">Camera</div>
<div class="" style="left:1281px;top:159px;width:2px;height:11px;background:#333"></div>
<svg style="left:1293px;top:159px;" width="16" height="10" viewBox="0 0 16 10"><path d="M1 5 Q8 -1 15 5 Q8 9 1 5Z" fill="#8a8a8a" opacity="0.6"/></svg>
<svg style="left:1315px;top:156px;" width="12" height="16" viewBox="0 0 12 16"><path d="M2 1 L2 13 L5 10 L7.5 15 L9.5 14 L7 9 L11 9Z" fill="#f4f4f4" stroke="#111" stroke-width="1"/></svg>
<svg style="left:1332px;top:157px;" width="16" height="14" viewBox="0 0 16 14"><rect x="1" y="3" width="14" height="10" rx="1" fill="#e0e0e0" stroke="#222" stroke-width="1"/><rect x="3" y="1" width="4" height="3" fill="#333"/><circle cx="8.5" cy="8" r="3.2" fill="#333"/><circle cx="8.5" cy="8" r="1.8" fill="#c03030"/><rect x="2" y="5" width="2" height="1.5" fill="#d02020"/></svg>
<svg style="left:1193.5px;top:178px;" width="12" height="12" viewBox="0 0 12 12"><circle cx="6" cy="6" r="4.6" fill="#e4e4e4" stroke="#1a1a1a" stroke-width="0.9"/><path d="M3.2 6h5.6" stroke="#111" stroke-width="1.2"/><path d="M6 3.2v5.6" stroke="#111" stroke-width="1.2"/></svg>
<div class="" style="left:1204px;top:184px;width:8px;height:1px;background:#2a2a2a"></div>
<svg style="left:1212px;top:176px;" width="16" height="16" viewBox="0 0 16 16"><path d="M2.5 2.5 L13.5 2.5 L8 13.5Z" fill="none" stroke="#ffffff" stroke-width="3.2" opacity="0.35"/><path d="M2.5 2.5 L13.5 2.5 L8 13.5Z" fill="none" stroke="#f29f3a" stroke-width="1.6"/><circle cx="2.5" cy="2.5" r="1.3" fill="#fff"/><circle cx="13.5" cy="2.5" r="1.3" fill="#fff"/><circle cx="8" cy="13.5" r="1.3" fill="#fff"/></svg>
<div class="t" style="left:1232px;top:178px;color:#111">Cone</div>
<div class="" style="left:1267px;top:179px;width:2px;height:11px;background:#333"></div>
<svg style="left:1283px;top:176px;" width="14" height="16" viewBox="0 0 14 16"><path d="M2 2.5 L12 2.5 L7 13.5Z" fill="none" stroke="#5a5a5a" stroke-width="1.1"/><circle cx="2" cy="2.5" r="1.4" fill="#fff" stroke="#333" stroke-width="0.5"/><circle cx="12" cy="2.5" r="1.4" fill="#fff" stroke="#333" stroke-width="0.5"/><circle cx="7" cy="13.5" r="1.4" fill="#fff" stroke="#333" stroke-width="0.5"/></svg>
<svg style="left:1293px;top:179px;" width="16" height="10" viewBox="0 0 16 10"><path d="M1 5 Q8 -1.5 15 5 Q8 11.5 1 5Z" fill="#fafafa" stroke="#222" stroke-width="0.9"/><circle cx="8" cy="5" r="2.6" fill="#333"/><circle cx="8.6" cy="4.3" r="0.8" fill="#fff"/></svg>
<svg style="left:1315px;top:176px;" width="12" height="16" viewBox="0 0 12 16"><path d="M2 1 L2 13 L5 10 L7.5 15 L9.5 14 L7 9 L11 9Z" fill="#f4f4f4" stroke="#111" stroke-width="1"/></svg>
<svg style="left:1332px;top:177px;" width="16" height="14" viewBox="0 0 16 14"><rect x="1" y="3" width="14" height="10" rx="1" fill="#e0e0e0" stroke="#222" stroke-width="1"/><rect x="3" y="1" width="4" height="3" fill="#333"/><circle cx="8.5" cy="8" r="3.2" fill="#333"/><circle cx="8.5" cy="8" r="1.8" fill="#c03030"/><rect x="2" y="5" width="2" height="1.5" fill="#d02020"/></svg>
<svg style="left:1193.5px;top:198px;" width="12" height="12" viewBox="0 0 12 12"><circle cx="6" cy="6" r="4.6" fill="#e4e4e4" stroke="#1a1a1a" stroke-width="0.9"/><path d="M3.2 6h5.6" stroke="#111" stroke-width="1.2"/><path d="M6 3.2v5.6" stroke="#111" stroke-width="1.2"/></svg>
<div class="" style="left:1204px;top:204px;width:8px;height:1px;background:#2a2a2a"></div>
<svg style="left:1212px;top:196px;" width="16" height="16" viewBox="0 0 16 16"><path d="M2.5 2.5 L13.5 2.5 L8 13.5Z" fill="none" stroke="#ffffff" stroke-width="3.2" opacity="0.35"/><path d="M2.5 2.5 L13.5 2.5 L8 13.5Z" fill="none" stroke="#f29f3a" stroke-width="1.6"/><circle cx="2.5" cy="2.5" r="1.3" fill="#fff"/><circle cx="13.5" cy="2.5" r="1.3" fill="#fff"/><circle cx="8" cy="13.5" r="1.3" fill="#fff"/></svg>
<div class="t" style="left:1232px;top:198px;color:#111">Cone.001</div>
<svg style="left:1293px;top:199px;" width="16" height="10" viewBox="0 0 16 10"><path d="M1 5 Q8 -1.5 15 5 Q8 11.5 1 5Z" fill="#fafafa" stroke="#222" stroke-width="0.9"/><circle cx="8" cy="5" r="2.6" fill="#333"/><circle cx="8.6" cy="4.3" r="0.8" fill="#fff"/></svg>
<svg style="left:1315px;top:196px;" width="12" height="16" viewBox="0 0 12 16"><path d="M2 1 L2 13 L5 10 L7.5 15 L9.5 14 L7 9 L11 9Z" fill="#f4f4f4" stroke="#111" stroke-width="1"/></svg>
<svg style="left:1332px;top:197px;" width="16" height="14" viewBox="0 0 16 14"><rect x="1" y="3" width="14" height="10" rx="1" fill="#e0e0e0" stroke="#222" stroke-width="1"/><rect x="3" y="1" width="4" height="3" fill="#333"/><circle cx="8.5" cy="8" r="3.2" fill="#333"/><circle cx="8.5" cy="8" r="1.8" fill="#c03030"/><rect x="2" y="5" width="2" height="1.5" fill="#d02020"/></svg>
<svg style="left:1193.5px;top:218px;" width="12" height="12" viewBox="0 0 12 12"><circle cx="6" cy="6" r="4.6" fill="#e4e4e4" stroke="#1a1a1a" stroke-width="0.9"/><path d="M3.2 6h5.6" stroke="#111" stroke-width="1.2"/><path d="M6 3.2v5.6" stroke="#111" stroke-width="1.2"/></svg>
<div class="" style="left:1204px;top:224px;width:8px;height:1px;background:#2a2a2a"></div>
<svg style="left:1212px;top:216px;" width="16" height="16" viewBox="0 0 16 16"><path d="M2.5 2.5 L13.5 2.5 L8 13.5Z" fill="none" stroke="#ffffff" stroke-width="3.2" opacity="0.35"/><path d="M2.5 2.5 L13.5 2.5 L8 13.5Z" fill="none" stroke="#f29f3a" stroke-width="1.6"/><circle cx="2.5" cy="2.5" r="1.3" fill="#fff"/><circle cx="13.5" cy="2.5" r="1.3" fill="#fff"/><circle cx="8" cy="13.5" r="1.3" fill="#fff"/></svg>
<div class="t" style="left:1232px;top:218px;color:#111">Cone.002</div>
<svg style="left:1293px;top:219px;" width="16" height="10" viewBox="0 0 16 10"><path d="M1 5 Q8 -1.5 15 5 Q8 11.5 1 5Z" fill="#fafafa" stroke="#222" stroke-width="0.9"/><circle cx="8" cy="5" r="2.6" fill="#333"/><circle cx="8.6" cy="4.3" r="0.8" fill="#fff"/></svg>
<svg style="left:1315px;top:216px;" width="12" height="16" viewBox="0 0 12 16"><path d="M2 1 L2 13 L5 10 L7.5 15 L9.5 14 L7 9 L11 9Z" fill="#f4f4f4" stroke="#111" stroke-width="1"/></svg>
<svg style="left:1332px;top:217px;" width="16" height="14" viewBox="0 0 16 14"><rect x="1" y="3" width="14" height="10" rx="1" fill="#e0e0e0" stroke="#222" stroke-width="1"/><rect x="3" y="1" width="4" height="3" fill="#333"/><circle cx="8.5" cy="8" r="3.2" fill="#333"/><circle cx="8.5" cy="8" r="1.8" fill="#c03030"/><rect x="2" y="5" width="2" height="1.5" fill="#d02020"/></svg>
<svg style="left:1193.5px;top:238px;" width="12" height="12" viewBox="0 0 12 12"><circle cx="6" cy="6" r="4.6" fill="#e4e4e4" stroke="#1a1a1a" stroke-width="0.9"/><path d="M3.2 6h5.6" stroke="#111" stroke-width="1.2"/><path d="M6 3.2v5.6" stroke="#111" stroke-width="1.2"/></svg>
<div class="" style="left:1204px;top:244px;width:8px;height:1px;background:#2a2a2a"></div>
<svg style="left:1212px;top:236px;" width="16" height="16" viewBox="0 0 16 16"><path d="M2.5 2.5 L13.5 2.5 L8 13.5Z" fill="none" stroke="#ffffff" stroke-width="3.2" opacity="0.35"/><path d="M2.5 2.5 L13.5 2.5 L8 13.5Z" fill="none" stroke="#f29f3a" stroke-width="1.6"/><circle cx="2.5" cy="2.5" r="1.3" fill="#fff"/><circle cx="13.5" cy="2.5" r="1.3" fill="#fff"/><circle cx="8" cy="13.5" r="1.3" fill="#fff"/></svg>
<div class="t" style="left:1232px;top:238px;color:#111">Cube</div>
<div class="" style="left:1267px;top:239px;width:2px;height:11px;background:#333"></div>
<svg style="left:1283px;top:236px;" width="14" height="16" viewBox="0 0 14 16"><path d="M2 2.5 L12 2.5 L7 13.5Z" fill="none" stroke="#5a5a5a" stroke-width="1.1"/><circle cx="2" cy="2.5" r="1.4" fill="#fff" stroke="#333" stroke-width="0.5"/><circle cx="12" cy="2.5" r="1.4" fill="#fff" stroke="#333" stroke-width="0.5"/><circle cx="7" cy="13.5" r="1.4" fill="#fff" stroke="#333" stroke-width="0.5"/></svg>
<svg style="left:1293px;top:239px;" width="16" height="10" viewBox="0 0 16 10"><path d="M1 5 Q8 -1.5 15 5 Q8 11.5 1 5Z" fill="#fafafa" stroke="#222" stroke-width="0.9"/><circle cx="8" cy="5" r="2.6" fill="#333"/><circle cx="8.6" cy="4.3" r="0.8" fill="#fff"/></svg>
<svg style="left:1315px;top:236px;" width="12" height="16" viewBox="0 0 12 16"><path d="M2 1 L2 13 L5 10 L7.5 15 L9.5 14 L7 9 L11 9Z" fill="#f4f4f4" stroke="#111" stroke-width="1"/></svg>
<svg style="left:1332px;top:237px;" width="16" height="14" viewBox="0 0 16 14"><rect x="1" y="3" width="14" height="10" rx="1" fill="#e0e0e0" stroke="#222" stroke-width="1"/><rect x="3" y="1" width="4" height="3" fill="#333"/><circle cx="8.5" cy="8" r="3.2" fill="#333"/><circle cx="8.5" cy="8" r="1.8" fill="#c03030"/><rect x="2" y="5" width="2" height="1.5" fill="#d02020"/></svg>
<svg style="left:1193.5px;top:258px;" width="12" height="12" viewBox="0 0 12 12"><circle cx="6" cy="6" r="4.6" fill="#e4e4e4" stroke="#1a1a1a" stroke-width="0.9"/><path d="M3.2 6h5.6" stroke="#111" stroke-width="1.2"/><path d="M6 3.2v5.6" stroke="#111" stroke-width="1.2"/></svg>
<div class="" style="left:1204px;top:264px;width:8px;height:1px;background:#2a2a2a"></div>
<svg style="left:1212px;top:256px;" width="16" height="16" viewBox="0 0 16 16"><path d="M2.5 2.5 L13.5 2.5 L8 13.5Z" fill="none" stroke="#ffffff" stroke-width="3.2" opacity="0.35"/><path d="M2.5 2.5 L13.5 2.5 L8 13.5Z" fill="none" stroke="#f29f3a" stroke-width="1.6"/><circle cx="2.5" cy="2.5" r="1.3" fill="#fff"/><circle cx="13.5" cy="2.5" r="1.3" fill="#fff"/><circle cx="8" cy="13.5" r="1.3" fill="#fff"/></svg>
<div class="t" style="left:1232px;top:258px;color:#111">Cube.001</div>
<svg style="left:1293px;top:259px;" width="16" height="10" viewBox="0 0 16 10"><path d="M1 5 Q8 -1.5 15 5 Q8 11.5 1 5Z" fill="#fafafa" stroke="#222" stroke-width="0.9"/><circle cx="8" cy="5" r="2.6" fill="#333"/><circle cx="8.6" cy="4.3" r="0.8" fill="#fff"/></svg>
<svg style="left:1315px;top:256px;" width="12" height="16" viewBox="0 0 12 16"><path d="M2 1 L2 13 L5 10 L7.5 15 L9.5 14 L7 9 L11 9Z" fill="#f4f4f4" stroke="#111" stroke-width="1"/></svg>
<svg style="left:1332px;top:257px;" width="16" height="14" viewBox="0 0 16 14"><rect x="1" y="3" width="14" height="10" rx="1" fill="#e0e0e0" stroke="#222" stroke-width="1"/><rect x="3" y="1" width="4" height="3" fill="#333"/><circle cx="8.5" cy="8" r="3.2" fill="#333"/><circle cx="8.5" cy="8" r="1.8" fill="#c03030"/><rect x="2" y="5" width="2" height="1.5" fill="#d02020"/></svg>
<svg style="left:1212px;top:280px;" width="16" height="16" viewBox="0 0 16 16"><path d="M2.5 2.5 L13.5 2.5 L8 13.5Z" fill="none" stroke="#ffffff" stroke-width="3.2" opacity="0.35"/><path d="M2.5 2.5 L13.5 2.5 L8 13.5Z" fill="none" stroke="#f29f3a" stroke-width="1.6"/><circle cx="2.5" cy="2.5" r="1.3" fill="#fff"/><circle cx="13.5" cy="2.5" r="1.3" fill="#fff"/><circle cx="8" cy="13.5" r="1.3" fill="#fff"/></svg>
<div class="" style="left:1349px;top:56px;width:13px;height:219px;background:#656565;border-radius:6px"></div>
<div class="" style="left:1349px;top:58px;width:13px;height:54px;background:linear-gradient(90deg,#8e8e8e,#7c7c7c);border-radius:6px;border:1px solid #5c5c5c"></div>
<div class="" style="left:1170px;top:278px;width:195px;height:19px;background:#727272"></div>
<div class="" style="left:1174px;top:281px;width:170px;height:12px;background:#5e5e5e;border-radius:6px"></div>
<div class="" style="left:1174px;top:281px;width:100px;height:12px;background:linear-gradient(#a0a0a0,#8a8a8a);border-radius:6px;border:1px solid #5a5a5a"></div>
<svg style="left:1170px;top:284px;" width="13" height="13" viewBox="0 0 13 13"><path d="M0 4 L9 13 M0 8 L5 13 M0 0 L13 13" stroke="#a8a8a8" stroke-width="1.2" fill="none"/><path d="M0 5 L8 13 M0 9 L4 13 M0 1 L12 13" stroke="#3a3a3a" stroke-width="0.8" fill="none"/></svg>
<div class="" style="left:1168px;top:297px;width:197px;height:1px;background:#0c0c0c"></div>
<div class="" style="left:1170px;top:298px;width:195px;height:416px;background:#727272"></div>
<div class="" style="left:1170px;top:323px;width:195px;height:1px;background:#656565"></div>
<div class="dd" style="left:1178px;top:301px;width:32px;height:20px;"></div>
<svg style="left:1182px;top:304px;" width="16" height="14" viewBox="0 0 16 14"><rect x="1" y="1.5" width="12" height="4.5" rx="2" fill="#eee" stroke="#222" stroke-width="0.8"/><rect x="1" y="8" width="12" height="4.5" rx="2" fill="#eee" stroke="#222" stroke-width="0.8"/><circle cx="10" cy="3.7" r="1.8" fill="#555"/><circle cx="4" cy="10.3" r="1.8" fill="#555"/></svg>
<svg style="left:1199px;top:304px;" width="8" height="14" viewBox="0 0 8 14"><path d="M1 5.5 L4 1 L7 5.5Z M1 8.5 L4 13 L7 8.5Z" fill="#a8a8a8"/></svg>
<div class="" style="left:1218px;top:301px;width:100px;height:20px;border:1px solid #222;border-radius:4px;background:linear-gradient(#4a4a4a,#3c3c3c);overflow:hidden"></div>
<div class="" style="left:1277px;top:302px;width:20px;height:18px;background:#8ec0f8"></div>
<div class="" style="left:1237px;top:302px;width:1px;height:18px;background:#262626"></div>
<div class="" style="left:1257px;top:302px;width:1px;height:18px;background:#262626"></div>
<div class="" style="left:1277px;top:302px;width:1px;height:18px;background:#262626"></div>
<div class="" style="left:1297px;top:302px;width:1px;height:18px;background:#262626"></div>
<svg style="left:1222px;top:304px;" width="14" height="14" viewBox="0 0 14 14"><rect x="0.5" y="3" width="13" height="9" rx="1" fill="#c8c8c8" stroke="#222" stroke-width="0.8"/><circle cx="7.5" cy="7.5" r="3" fill="#444"/><circle cx="7.5" cy="7.5" r="1.6" fill="#a03030"/><rect x="2" y="1.5" width="3" height="2" fill="#333"/></svg>
<svg style="left:1240px;top:303px;" width="15" height="16" viewBox="0 0 15 16"><rect x="4" y="5" width="10" height="10" fill="#c8c0a0" stroke="#222" stroke-width="0.7" transform="rotate(10 9 10)"/><rect x="1" y="1" width="10" height="10" fill="#d8d8d8" stroke="#222" stroke-width="0.7"/><rect x="5" y="3" width="3" height="6" rx="1" fill="#5a8ad8"/><circle cx="4.5" cy="8" r="2" fill="#ddd" stroke="#222" stroke-width="0.6"/></svg>
<svg style="left:1260px;top:304px;" width="16" height="16" viewBox="0 0 16 16"><circle cx="3" cy="3" r="2" fill="#ffff60" opacity="0.8"/><rect x="7" y="2" width="6" height="10" rx="2" fill="#5a8ad8" stroke="#223" stroke-width="0.8"/><circle cx="6" cy="11" r="3.6" fill="#e8e8e8" stroke="#222" stroke-width="0.8"/></svg>
<svg style="left:1279px;top:303px;" width="16" height="16" viewBox="0 0 16 16"><circle cx="8" cy="8" r="7" fill="#2d5d98" stroke="#16243c" stroke-width="1"/><path d="M3 5 q2 -4 6 -3 q1 2 -1 4 q-1 3 -3 3 q-2 -1 -2 -4z M10 9 q3 -1 3 2 q-2 3 -4 2z" fill="#6a9a40"/><circle cx="8" cy="8" r="5.8" fill="none" stroke="#fff" stroke-width="0.8" opacity="0.35"/></svg>
<svg style="left:1300px;top:304px;" width="14" height="14" viewBox="0 0 14 14"><rect x="0.5" y="0.5" width="13" height="13" fill="#d8d8d8" stroke="#333" stroke-width="0.8"/><path d="M1 1h3v3H1z M7 1h3v3H7z M4 4h3v3H4z M10 4h3v3h-3z M1 7h3v3H1z M7 7h3v3H7z M4 10h3v3H4z M10 10h3v3h-3z" fill="#a03030"/></svg>
<svg style="left:1352px;top:298px;" width="13" height="13" viewBox="0 0 13 13"><path d="M13 9 L4 0 M13 5 L8 0 M13 13 L0 0" stroke="#a8a8a8" stroke-width="1.2" fill="none"/><path d="M13 8 L5 0 M13 4 L9 0 M13 12 L1 0" stroke="#3a3a3a" stroke-width="0.8" fill="none"/></svg>
<div class="" style="left:1349px;top:330px;width:13px;height:380px;background:#656565;border-radius:6px"></div>
<div class="" style="left:1349px;top:330px;width:13px;height:193px;background:linear-gradient(90deg,#8e8e8e,#7c7c7c);border-radius:6px;border:1px solid #5c5c5c"></div>
<svg style="left:1179px;top:334px;" width="16" height="16" viewBox="0 0 16 16"><path d="M6 10 L1.5 14.5" stroke="#eee" stroke-width="1.6"/><path d="M4 7 L9 12 L10 9.5 L13.5 6 L15 6.5 L9.5 1 L10 2.5 L6.5 6Z" fill="#f0f0f0" stroke="#222" stroke-width="0.9"/></svg>
<svg style="left:1199px;top:335px;" width="16" height="16" viewBox="0 0 16 16"><circle cx="3" cy="3" r="2" fill="#ffff60" opacity="0.8"/><rect x="7" y="2" width="6" height="10" rx="2" fill="#5a8ad8" stroke="#223" stroke-width="0.8"/><circle cx="6" cy="11" r="3.6" fill="#e8e8e8" stroke="#222" stroke-width="0.8"/></svg>
<svg style="left:1219px;top:339px;" width="5" height="8" viewBox="0 0 5 8"><path d="M0.5 0.5 L4.5 4 L0.5 7.5Z" fill="#333"/></svg>
<svg style="left:1240px;top:335px;" width="16" height="16" viewBox="0 0 16 16"><circle cx="8" cy="8" r="7" fill="#2d5d98" stroke="#16243c" stroke-width="1"/><path d="M3 5 q2 -4 6 -3 q1 2 -1 4 q-1 3 -3 3 q-2 -1 -2 -4z M10 9 q3 -1 3 2 q-2 3 -4 2z" fill="#6a9a40"/><circle cx="8" cy="8" r="5.8" fill="none" stroke="#fff" stroke-width="0.8" opacity="0.35"/></svg>
<div class="t" style="left:1260px;top:337px;color:#111;font-size:12px">World</div>
<div class="" style="left:1177px;top:369px;width:139px;height:19px;border:1px solid #222;border-radius:4px;background:linear-gradient(#4a4a4a,#3c3c3c);overflow:hidden"></div>
<div class="" style="left:1209px;top:370px;width:46px;height:17px;background:linear-gradient(#bdbdbd,#a6a6a6)"></div>
<div class="" style="left:1255px;top:370px;width:60px;height:17px;background:linear-gradient(#a6a6a6,#8e8e8e);border-radius:0 3px 3px 0"></div>
<div class="" style="left:1209px;top:370px;width:1px;height:17px;background:#262626"></div>
<div class="" style="left:1255px;top:370px;width:1px;height:17px;background:#262626"></div>
<div class="" style="left:1275px;top:370px;width:1px;height:17px;background:#262626"></div>
<div class="" style="left:1295px;top:370px;width:1px;height:17px;background:#262626"></div>
<svg style="left:1181px;top:371px;" width="16" height="16" viewBox="0 0 16 16"><circle cx="8" cy="8" r="7" fill="#2d5d98" stroke="#16243c" stroke-width="1"/><path d="M3 5 q2 -4 6 -3 q1 2 -1 4 q-1 3 -3 3 q-2 -1 -2 -4z M10 9 q3 -1 3 2 q-2 3 -4 2z" fill="#6a9a40"/><circle cx="8" cy="8" r="5.8" fill="none" stroke="#fff" stroke-width="0.8" opacity="0.35"/></svg>
<svg style="left:1197px;top:371px;" width="8" height="14" viewBox="0 0 8 14"><path d="M1 5.5 L4 1 L7 5.5Z M1 8.5 L4 13 L7 8.5Z" fill="#a8a8a8"/></svg>
<div class="t" style="left:1215px;top:372px;color:#111">World</div>
<div class="t" style="left:1261px;top:372px;color:#111">F</div>
<svg style="left:1279px;top:373px;" width="12" height="12" viewBox="0 0 12 12"><path d="M6 1v10 M1 6h10" stroke="#1a1a1a" stroke-width="3.6"/><path d="M6 1.8v8.4 M1.8 6h8.4" stroke="#eee" stroke-width="1.9"/></svg>
<svg style="left:1299px;top:373px;" width="12" height="12" viewBox="0 0 12 12"><path d="M1.8 1.8l8.4 8.4 M10.2 1.8l-8.4 8.4" stroke="#1a1a1a" stroke-width="3.6"/><path d="M2.3 2.3l7.4 7.4 M9.7 2.3l-7.4 7.4" stroke="#eee" stroke-width="1.9"/></svg>
<div class="sep" style="left:1173px;top:394px;width:171px;height:2px;"></div>
<svg style="left:1181px;top:404px;" width="9" height="8" viewBox="0 0 9 8"><path d="M0.5 0.5 L8.5 0.5 L4.5 7.5Z" fill="#222"/></svg>
<div class="t" style="left:1195px;top:401px;color:#111;font-size:12px">プレビュー</div>
<div class="dots" style="left:1328px;top:406px"></div>
<div class="" style="left:1177px;top:428px;width:164px;height:111px;background:#424242;border-radius:5px;border:1px solid #3a3a3a"></div>
<div class="" style="left:1252px;top:544px;width:14px;height:1px;background:#d8d8d8"></div>
<div class="" style="left:1252px;top:546px;width:14px;height:1px;background:#d8d8d8"></div>
<div class="sep" style="left:1173px;top:554px;width:171px;height:2px;"></div>
<svg style="left:1181px;top:564px;" width="9" height="8" viewBox="0 0 9 8"><path d="M0.5 0.5 L8.5 0.5 L4.5 7.5Z" fill="#222"/></svg>
<div class="t" style="left:1195px;top:561px;color:#111;font-size:12px">ワールド</div>
<div class="dots" style="left:1328px;top:566px"></div>
<div class="cb" style="left:1180px;top:591px;width:14px;height:14px;"></div>
<div class="t" style="left:1201px;top:592px;color:#111">ペー</div>
<div class="cb" style="left:1237px;top:591px;width:14px;height:14px;"></div>
<div class="t" style="left:1258px;top:592px;color:#111">プレ</div>
<div class="cb" style="left:1294px;top:591px;width:14px;height:14px;"></div>
<div class="t" style="left:1315px;top:592px;color:#111">リア</div>
<div class="t" style="left:1184px;top:617px;color:#111">水平色:</div>
<div class="t" style="left:1241px;top:617px;color:#8a8a8a">天頂カラ</div>
<div class="t" style="left:1298px;top:617px;color:#111">周囲光の</div>
<div class="" style="left:1177px;top:633px;width:49px;height:20px;background:#464646;border:1px solid #2e2e2e;border-radius:4px"></div>
<div class="" style="left:1234px;top:633px;width:49px;height:20px;background:#484848;border:1px solid #3a3a3a;border-radius:4px"></div>
<div class="" style="left:1291px;top:633px;width:50px;height:20px;background:#000;border:1px solid #2a2a2a;border-radius:4px"></div>
<div class="num" style="left:1177px;top:659px;width:78px;height:19px;"></div>
<div class="t" style="left:1177px;top:662px;width:78px;text-align:center;color:#111">露:0.000</div>
<svg style="left:1182px;top:664.5px;" width="5" height="8" viewBox="0 0 5 8"><path d="M4 0.5 L0.5 4 L4 7.5Z" fill="#6a6a6a"/></svg>
<svg style="left:1245px;top:664.5px;" width="5" height="8" viewBox="0 0 5 8"><path d="M1 0.5 L4.5 4 L1 7.5Z" fill="#6a6a6a"/></svg>
<div class="num" style="left:1263px;top:659px;width:78px;height:19px;"></div>
<div class="t" style="left:1263px;top:662px;width:78px;text-align:center;color:#111">範:1.000</div>
<svg style="left:1268px;top:664.5px;" width="5" height="8" viewBox="0 0 5 8"><path d="M4 0.5 L0.5 4 L4 7.5Z" fill="#6a6a6a"/></svg>
<svg style="left:1331px;top:664.5px;" width="5" height="8" viewBox="0 0 5 8"><path d="M1 0.5 L4.5 4 L1 7.5Z" fill="#6a6a6a"/></svg>
<div class="sep" style="left:1173px;top:685px;width:171px;height:2px;"></div>
<svg style="left:1181px;top:694px;" width="9" height="8" viewBox="0 0 9 8"><path d="M0.5 0.5 L8.5 0.5 L4.5 7.5Z" fill="#222"/></svg>
<div class="cb" style="left:1194px;top:691px;width:14px;height:14px;"></div>
<div class="t" style="left:1215px;top:692px;color:#111;font-size:12px">アンビエントオクルージ</div>
<div class="dots" style="left:1328px;top:696px"></div>
<svg style="left:1170px;top:701px;" width="13" height="13" viewBox="0 0 13 13"><path d="M0 4 L9 13 M0 8 L5 13 M0 0 L13 13" stroke="#a8a8a8" stroke-width="1.2" fill="none"/><path d="M0 5 L8 13 M0 9 L4 13 M0 1 L12 13" stroke="#3a3a3a" stroke-width="0.8" fill="none"/></svg>
<div class="" style="left:0px;top:623px;width:1168px;height:26px;background:#727272"></div>
<div class="" style="left:0px;top:623px;width:1168px;height:1px;background:#7a7a7a"></div>
<div class="" style="left:0px;top:649px;width:1168px;height:1px;background:#0c0c0c"></div>
<svg style="left:0px;top:636px;" width="13" height="13" viewBox="0 0 13 13"><path d="M0 4 L9 13 M0 8 L5 13 M0 0 L13 13" stroke="#a8a8a8" stroke-width="1.2" fill="none"/><path d="M0 5 L8 13 M0 9 L4 13 M0 1 L12 13" stroke="#3a3a3a" stroke-width="0.8" fill="none"/></svg>
<div class="dd" style="left:9px;top:626px;width:32px;height:20px;"></div>
<svg style="left:14px;top:628px;" width="16" height="16" viewBox="0 0 16 16"><path d="M8 1.5 L14.5 4.5 L14.5 11 L8 14.5 L1.5 11 L1.5 4.5Z" fill="#ddd" stroke="#222" stroke-width="1"/><path d="M1.5 4.5 L8 7.5 L14.5 4.5 M8 7.5 L8 14.5" stroke="#222" stroke-width="0.9" fill="none"/><path d="M8 7.5 L14.5 4.5 L14.5 11 L8 14.5Z" fill="#aaa"/><path d="M1.5 4.5 L8 1.5 L14.5 4.5 L8 7.5Z" fill="#f4f4f4"/></svg>
<svg style="left:30px;top:629px;" width="8" height="14" viewBox="0 0 8 14"><path d="M1 5.5 L4 1 L7 5.5Z M1 8.5 L4 13 L7 8.5Z" fill="#a8a8a8"/></svg>
<div class="t" style="left:54px;top:630px;color:#111">ビュー</div>
<div class="t" style="left:106px;top:630px;color:#111">選択</div>
<div class="t" style="left:148px;top:630px;color:#111">追加</div>
<div class="t" style="left:191px;top:630px;color:#111">オブジェクト</div>
<div class="dd" style="left:269px;top:626px;width:149px;height:20px;"></div>
<svg style="left:275px;top:628px;" width="15" height="16" viewBox="0 0 15 16"><path d="M7.5 1 L14 4 L14 11.5 L7.5 15 L1 11.5 L1 4Z" fill="#f0a040" stroke="#5a3a10" stroke-width="0.9"/><path d="M1 4 L7.5 7.5 L14 4 M7.5 7.5 L7.5 15" stroke="#804a10" stroke-width="0.8" fill="none"/><path d="M1 4 L7.5 1 L14 4 L7.5 7.5Z" fill="#ffc070"/></svg>
<div class="t" style="left:293px;top:630px;color:#f0f0f0">オブジェクトモード</div>
<svg style="left:407px;top:629px;" width="8" height="14" viewBox="0 0 8 14"><path d="M1 5.5 L4 1 L7 5.5Z M1 8.5 L4 13 L7 8.5Z" fill="#a8a8a8"/></svg>
<div class="dd" style="left:423px;top:626px;width:32px;height:20px;"></div>
<svg style="left:429px;top:629px;" width="14" height="14" viewBox="0 0 14 14"><circle cx="7" cy="7" r="6" fill="#f0f0f0" stroke="#222" stroke-width="0.8"/><circle cx="5.5" cy="5" r="3" fill="#fff"/></svg>
<svg style="left:444px;top:629px;" width="8" height="14" viewBox="0 0 8 14"><path d="M1 5.5 L4 1 L7 5.5Z M1 8.5 L4 13 L7 8.5Z" fill="#a8a8a8"/></svg>
<div class="dd" style="left:460px;top:626px;width:51px;height:20px;"></div>
<div class="" style="left:491px;top:627px;width:19px;height:18px;background:linear-gradient(#a6a6a6,#8e8e8e);border-left:1px solid #222;border-radius:0 3px 3px 0"></div>
<svg style="left:464px;top:628px;" width="16" height="16" viewBox="0 0 16 16"><circle cx="6" cy="5.5" r="4.2" fill="#eee" stroke="#111" stroke-width="1"/><circle cx="10.5" cy="11" r="4.2" fill="#eee" stroke="#111" stroke-width="1"/><rect x="6.5" y="7" width="3.5" height="3.5" fill="#fff" stroke="#1060e0" stroke-width="1"/></svg>
<svg style="left:480px;top:629px;" width="8" height="14" viewBox="0 0 8 14"><path d="M1 5.5 L4 1 L7 5.5Z M1 8.5 L4 13 L7 8.5Z" fill="#a8a8a8"/></svg>
<svg style="left:493px;top:628px;" width="16" height="16" viewBox="0 0 16 16"><circle cx="4" cy="3" r="1.6" fill="#cde" stroke="#2a50a0" stroke-width="1"/><circle cx="9" cy="3" r="1.6" fill="#cde" stroke="#2a50a0" stroke-width="1"/><circle cx="14" cy="3" r="1.6" fill="#cde" stroke="#2a50a0" stroke-width="1"/><path d="M3 10h12 M3 10l3.5 -3 M3 10l3.5 3 M15 10l-3.5 -3 M15 10l-3.5 3" stroke="#222" stroke-width="3.2" fill="none" stroke-linecap="round"/><path d="M3 10h12 M3 10l3.5 -3 M3 10l3.5 3 M15 10l-3.5 -3 M15 10l-3.5 3" stroke="#fff" stroke-width="1.6" fill="none" stroke-linecap="round"/></svg>
<div class="dd" style="left:518px;top:626px;width:170px;height:20px;"></div>
<div class="" style="left:537px;top:627px;width:18px;height:18px;background:#8ec0f8"></div>
<div class="" style="left:537px;top:627px;width:1px;height:18px;background:#262626"></div>
<div class="" style="left:555px;top:627px;width:1px;height:18px;background:#262626"></div>
<div class="" style="left:575px;top:627px;width:1px;height:18px;background:#262626"></div>
<div class="" style="left:597px;top:627px;width:1px;height:18px;background:#262626"></div>
<svg style="left:520px;top:628px;" width="16" height="16" viewBox="0 0 16 16"><path d="M8 9 L8 1.5" stroke="#3060e0" stroke-width="1.8"/><path d="M8 9 L2 14" stroke="#e03030" stroke-width="1.8"/><path d="M8 9 L14 14" stroke="#40c040" stroke-width="1.8"/></svg>
<svg style="left:539px;top:628px;" width="15" height="16" viewBox="0 0 15 16"><path d="M2 14 L12 4" stroke="#111" stroke-width="3.2"/><path d="M2 14 L12 4" stroke="#5a9ae8" stroke-width="1.6"/><path d="M7 2.5 L13.5 2.5 L13.5 9Z" fill="#5a9ae8" stroke="#111" stroke-width="0.9"/></svg>
<svg style="left:558px;top:628px;" width="16" height="16" viewBox="0 0 16 16"><path d="M2 15 Q3 4 14 2" stroke="#111" stroke-width="3.2" fill="none"/><path d="M2 15 Q3 4 14 2" stroke="#5a9ae8" stroke-width="1.6" fill="none"/></svg>
<svg style="left:578px;top:628px;" width="16" height="16" viewBox="0 0 16 16"><path d="M2 15 L9 8" stroke="#111" stroke-width="3.2"/><path d="M2 15 L9 8" stroke="#5a9ae8" stroke-width="1.6"/><rect x="7" y="2" width="7" height="6" fill="#5a9ae8" stroke="#111" stroke-width="0.9"/></svg>
<div class="t" style="left:606px;top:630px;color:#f0f0f0">グローバル</div>
<svg style="left:676px;top:629px;" width="8" height="14" viewBox="0 0 8 14"><path d="M1 5.5 L4 1 L7 5.5Z M1 8.5 L4 13 L7 8.5Z" fill="#a8a8a8"/></svg>
<div class="" style="left:692px;top:626px;width:50px;height:20px;border:1px solid #2a2a2a;border-radius:4px;background:#8a8a8a;overflow:hidden"></div>
<div class="" style="left:702px;top:627px;width:1px;height:18px;background:#6a6a6a"></div>
<div class="" style="left:712px;top:627px;width:1px;height:18px;background:#6a6a6a"></div>
<div class="" style="left:722px;top:627px;width:1px;height:18px;background:#6a6a6a"></div>
<div class="" style="left:732px;top:627px;width:1px;height:18px;background:#6a6a6a"></div>
<div class="" style="left:693px;top:636px;width:48px;height:1px;background:#6a6a6a"></div>
<div class="" style="left:747px;top:626px;width:50px;height:20px;border:1px solid #2a2a2a;border-radius:4px;background:#8a8a8a;overflow:hidden"></div>
<div class="" style="left:757px;top:627px;width:1px;height:18px;background:#6a6a6a"></div>
<div class="" style="left:767px;top:627px;width:1px;height:18px;background:#6a6a6a"></div>
<div class="" style="left:777px;top:627px;width:1px;height:18px;background:#6a6a6a"></div>
<div class="" style="left:787px;top:627px;width:1px;height:18px;background:#6a6a6a"></div>
<div class="" style="left:748px;top:636px;width:48px;height:1px;background:#6a6a6a"></div>
<svg style="left:694px;top:628px;" width="7" height="7" viewBox="0 0 7 7"><circle cx="3.5" cy="3.5" r="2.5" fill="#999" stroke="#333" stroke-width="1"/><circle cx="3.5" cy="3.5" r="1" fill="#555"/></svg>
<svg style="left:704px;top:628px;" width="7" height="7" viewBox="0 0 7 7"><circle cx="3.5" cy="3.5" r="2.5" fill="#999" stroke="#333" stroke-width="1"/><circle cx="3.5" cy="3.5" r="1" fill="#555"/></svg>
<div class="btn" style="left:802px;top:626px;width:20px;height:20px;"></div>
<svg style="left:805px;top:629px;" width="15" height="15" viewBox="0 0 15 15"><rect x="1" y="1" width="10" height="10" fill="#c8c8c8" stroke="#333" stroke-width="0.9"/><path d="M10 8 a2 2 0 1 1 0 4 M10 12 a2 2 0 1 1 0 -4" stroke="#fff" stroke-width="1.6" fill="none"/><rect x="9" y="7" width="4" height="8" rx="2" fill="none" stroke="#222" stroke-width="1"/></svg>
<div class="btn" style="left:828px;top:626px;width:71px;height:20px;"></div>
<div class="" style="left:846px;top:627px;width:32px;height:18px;background:#3e3e3e"></div>
<svg style="left:830px;top:628px;" width="16" height="16" viewBox="0 0 16 16"><path d="M4 13 L11 6 A3 3 0 0 0 7 2 L2 7" stroke="#555" stroke-width="4" fill="none"/><path d="M4 13 L11 6 A3 3 0 0 0 7 2 L2 7" stroke="#ccc" stroke-width="2" fill="none"/></svg>
<svg style="left:849px;top:630px;" width="20" height="12" viewBox="0 0 20 12"><path d="M1 6h18 M3 2v8 M6 3v6 M13 3v6 M16 2v8" stroke="#ddd" stroke-width="1"/><rect x="8.5" y="1" width="3" height="10" rx="1.2" fill="#5aa0f0" stroke="#fff" stroke-width="0.8"/></svg>
<svg style="left:867px;top:629px;" width="8" height="14" viewBox="0 0 8 14"><path d="M1 5.5 L4 1 L7 5.5Z M1 8.5 L4 13 L7 8.5Z" fill="#a8a8a8"/></svg>
<svg style="left:880px;top:628px;" width="17" height="16" viewBox="0 0 17 16"><path d="M2 10h14 M2 14h14 M7 6v10 M12 6v10" stroke="#222" stroke-width="1"/><circle cx="8" cy="5" r="4" fill="#5aa0f0" stroke="#fff" stroke-width="1.2"/><circle cx="8" cy="5" r="1.5" fill="#fff"/></svg>
<div class="btn" style="left:905px;top:626px;width:39px;height:20px;"></div>
<div class="" style="left:924px;top:627px;width:1px;height:18px;background:#262626"></div>
<svg style="left:907px;top:628px;" width="16" height="16" viewBox="0 0 16 16"><rect x="1" y="5" width="13" height="9" rx="1" fill="#ccc" stroke="#222" stroke-width="0.9"/><circle cx="7.5" cy="9.5" r="3" fill="#444"/><circle cx="7.5" cy="9.5" r="1.6" fill="#c03030"/><path d="M12 0.5v5 M9.5 3h5" stroke="#ff0" stroke-width="1.6"/></svg>
<svg style="left:926px;top:628px;" width="17" height="16" viewBox="0 0 17 16"><rect x="2" y="7" width="13" height="8" fill="#444" stroke="#222" stroke-width="0.9"/><path d="M2 7 L14 3 L13 1 L1 5Z" fill="#ddd" stroke="#222" stroke-width="0.8"/><rect x="5" y="10" width="8" height="2" fill="#ddd"/><rect x="1" y="6" width="3" height="6" fill="#6aaaf0"/></svg>
<div class="" style="left:0px;top:650px;width:1168px;height:21px;background:#727272"></div>
<div class="" style="left:0px;top:650px;width:200px;height:21px;background:#474747"></div>
<div class="" style="left:1054px;top:650px;width:114px;height:21px;background:#474747"></div>
<div class="" style="left:28px;top:650px;width:1px;height:21px;background:rgba(0,0,0,0.17)"></div>
<div class="" style="left:62px;top:650px;width:1px;height:21px;background:rgba(0,0,0,0.17)"></div>
<div class="" style="left:96px;top:650px;width:1px;height:21px;background:rgba(0,0,0,0.17)"></div>
<div class="" style="left:130px;top:650px;width:1px;height:21px;background:rgba(0,0,0,0.17)"></div>
<div class="" style="left:164px;top:650px;width:1px;height:21px;background:rgba(0,0,0,0.17)"></div>
<div class="" style="left:198px;top:650px;width:1px;height:21px;background:rgba(0,0,0,0.17)"></div>
<div class="" style="left:232px;top:650px;width:1px;height:21px;background:rgba(0,0,0,0.17)"></div>
<div class="" style="left:266px;top:650px;width:1px;height:21px;background:rgba(0,0,0,0.17)"></div>
<div class="" style="left:300px;top:650px;width:1px;height:21px;background:rgba(0,0,0,0.17)"></div>
<div class="" style="left:334px;top:650px;width:1px;height:21px;background:rgba(0,0,0,0.17)"></div>
<div class="" style="left:368px;top:650px;width:1px;height:21px;background:rgba(0,0,0,0.17)"></div>
<div class="" style="left:402px;top:650px;width:1px;height:21px;background:rgba(0,0,0,0.17)"></div>
<div class="" style="left:436px;top:650px;width:1px;height:21px;background:rgba(0,0,0,0.17)"></div>
<div class="" style="left:470px;top:650px;width:1px;height:21px;background:rgba(0,0,0,0.17)"></div>
<div class="" style="left:504px;top:650px;width:1px;height:21px;background:rgba(0,0,0,0.17)"></div>
<div class="" style="left:538px;top:650px;width:1px;height:21px;background:rgba(0,0,0,0.17)"></div>
<div class="" style="left:572px;top:650px;width:1px;height:21px;background:rgba(0,0,0,0.17)"></div>
<div class="" style="left:606px;top:650px;width:1px;height:21px;background:rgba(0,0,0,0.17)"></div>
<div class="" style="left:640px;top:650px;width:1px;height:21px;background:rgba(0,0,0,0.17)"></div>
<div class="" style="left:674px;top:650px;width:1px;height:21px;background:rgba(0,0,0,0.17)"></div>
<div class="" style="left:708px;top:650px;width:1px;height:21px;background:rgba(0,0,0,0.17)"></div>
<div class="" style="left:742px;top:650px;width:1px;height:21px;background:rgba(0,0,0,0.17)"></div>
<div class="" style="left:776px;top:650px;width:1px;height:21px;background:rgba(0,0,0,0.17)"></div>
<div class="" style="left:810px;top:650px;width:1px;height:21px;background:rgba(0,0,0,0.17)"></div>
<div class="" style="left:844px;top:650px;width:1px;height:21px;background:rgba(0,0,0,0.17)"></div>
<div class="" style="left:878px;top:650px;width:1px;height:21px;background:rgba(0,0,0,0.17)"></div>
<div class="" style="left:912px;top:650px;width:1px;height:21px;background:rgba(0,0,0,0.17)"></div>
<div class="" style="left:946px;top:650px;width:1px;height:21px;background:rgba(0,0,0,0.17)"></div>
<div class="" style="left:980px;top:650px;width:1px;height:21px;background:rgba(0,0,0,0.17)"></div>
<div class="" style="left:1014px;top:650px;width:1px;height:21px;background:rgba(0,0,0,0.17)"></div>
<div class="" style="left:1048px;top:650px;width:1px;height:21px;background:rgba(0,0,0,0.17)"></div>
<div class="" style="left:1082px;top:650px;width:1px;height:21px;background:rgba(0,0,0,0.17)"></div>
<div class="" style="left:1116px;top:650px;width:1px;height:21px;background:rgba(0,0,0,0.17)"></div>
<div class="" style="left:1150px;top:650px;width:1px;height:21px;background:rgba(0,0,0,0.17)"></div>
<div class="" style="left:198px;top:650px;width:2px;height:21px;background:#262626"></div>
<div class="" style="left:200px;top:650px;width:3px;height:21px;background:#f4a060"></div>
<div class="" style="left:201px;top:654px;width:1px;height:17px;background:#b8d848"></div>
<div class="" style="left:0px;top:671px;width:1168px;height:18px;background:#727272"></div>
<div class="" style="left:4px;top:672px;width:1163px;height:13px;border:1px solid #3a3a3a;border-radius:7px;background:linear-gradient(#a8a8a8,#8e8e8e)"></div>
<div class="" style="left:6px;top:673px;width:10px;height:10px;background:#6a6a6a;border-radius:50%;border:1px solid #555"></div>
<div class="t" style="left:41.5px;top:672px;width:40px;text-align:center;color:#111">-40</div>
<div class="t" style="left:109.5px;top:672px;width:40px;text-align:center;color:#111">-20</div>
<div class="t" style="left:180px;top:672px;width:40px;text-align:center;color:#111">0</div>
<div class="t" style="left:248px;top:672px;width:40px;text-align:center;color:#111">20</div>
<div class="t" style="left:316px;top:672px;width:40px;text-align:center;color:#111">40</div>
<div class="t" style="left:384px;top:672px;width:40px;text-align:center;color:#111">60</div>
<div class="t" style="left:452px;top:672px;width:40px;text-align:center;color:#111">80</div>
<div class="t" style="left:520px;top:672px;width:40px;text-align:center;color:#111">100</div>
<div class="t" style="left:588px;top:672px;width:40px;text-align:center;color:#111">120</div>
<div class="t" style="left:656px;top:672px;width:40px;text-align:center;color:#111">140</div>
<div class="t" style="left:724px;top:672px;width:40px;text-align:center;color:#111">160</div>
<div class="t" style="left:792px;top:672px;width:40px;text-align:center;color:#111">180</div>
<div class="t" style="left:860px;top:672px;width:40px;text-align:center;color:#111">200</div>
<div class="t" style="left:928px;top:672px;width:40px;text-align:center;color:#111">220</div>
<div class="t" style="left:996px;top:672px;width:40px;text-align:center;color:#111">240</div>
<div class="t" style="left:1064px;top:672px;width:40px;text-align:center;color:#111">260</div>
<div class="t" style="left:1132px;top:672px;width:40px;text-align:center;color:#111">280</div>
<div class="" style="left:0px;top:688px;width:1168px;height:1px;background:#7a7a7a"></div>
<div class="" style="left:0px;top:689px;width:1168px;height:25px;background:#727272"></div>
<svg style="left:0px;top:701px;" width="13" height="13" viewBox="0 0 13 13"><path d="M0 4 L9 13 M0 8 L5 13 M0 0 L13 13" stroke="#a8a8a8" stroke-width="1.2" fill="none"/><path d="M0 5 L8 13 M0 9 L4 13 M0 1 L12 13" stroke="#3a3a3a" stroke-width="0.8" fill="none"/></svg>
<svg style="left:1155px;top:651px;" width="13" height="13" viewBox="0 0 13 13"><path d="M13 9 L4 0 M13 5 L8 0 M13 13 L0 0" stroke="#a8a8a8" stroke-width="1.2" fill="none"/><path d="M13 8 L5 0 M13 4 L9 0 M13 12 L1 0" stroke="#3a3a3a" stroke-width="0.8" fill="none"/></svg>
<div class="dd" style="left:9px;top:692px;width:32px;height:20px;"></div>
<svg style="left:15px;top:695px;" width="14" height="14" viewBox="0 0 14 14"><circle cx="7" cy="7" r="6.2" fill="#f4f4f4" stroke="#222" stroke-width="1"/><path d="M7 2 L7 7 L4 10" stroke="#d02020" stroke-width="1.2" fill="none"/><circle cx="7" cy="7" r="5" fill="none" stroke="#999" stroke-width="0.6" stroke-dasharray="1 2.9"/></svg>
<svg style="left:30px;top:695px;" width="8" height="14" viewBox="0 0 8 14"><path d="M1 5.5 L4 1 L7 5.5Z M1 8.5 L4 13 L7 8.5Z" fill="#a8a8a8"/></svg>
<div class="t" style="left:54px;top:696px;color:#111">ビュー</div>
<div class="t" style="left:107px;top:696px;color:#111">マーカー</div>
<div class="t" style="left:171px;top:696px;color:#111">フレーム</div>
<div class="t" style="left:234px;top:696px;color:#111">再生</div>
<div class="btn" style="left:269px;top:692px;width:40px;height:20px;"></div>
<div class="" style="left:288px;top:693px;width:1px;height:18px;background:#262626"></div>
<svg style="left:271px;top:694px;" width="16" height="16" viewBox="0 0 16 16"><circle cx="8" cy="8" r="6.5" fill="#eee" stroke="#222" stroke-width="1"/><path d="M8 8 L8 1.5 A6.5 6.5 0 0 1 14.5 8Z" fill="#f0a030"/><path d="M8 8 L3 11" stroke="#d02020" stroke-width="1"/></svg>
<svg style="left:292px;top:694px;" width="14" height="16" viewBox="0 0 14 16"><rect x="2" y="7" width="10" height="8" fill="#ddd" stroke="#222" stroke-width="0.9"/><path d="M4 7 V4.5 a3 3 0 0 1 6 0 V7" stroke="#222" stroke-width="2.2" fill="none"/><path d="M4 7 V4.5 a3 3 0 0 1 6 0 V7" stroke="#ddd" stroke-width="1" fill="none"/></svg>
<div class="num" style="left:314px;top:692px;width:230px;height:20px;"></div>
<div class="" style="left:428px;top:693px;width:1px;height:18px;background:#262626"></div>
<div class="t" style="left:330px;top:696px;">開始:</div>
<div class="t" style="left:404px;top:696px;text-align:right;width:10px">1</div>
<div class="t" style="left:431px;top:696px;">終了:</div>
<div class="t" style="left:502px;top:696px;">250</div>
<svg style="left:319px;top:698px;" width="5" height="8" viewBox="0 0 5 8"><path d="M4 0.5 L0.5 4 L4 7.5Z" fill="#6a6a6a"/></svg>
<svg style="left:434px;top:698px;" width="5" height="8" viewBox="0 0 5 8"><path d="M4 0.5 L0.5 4 L4 7.5Z" fill="#6a6a6a"/></svg>
<svg style="left:421px;top:698px;" width="5" height="8" viewBox="0 0 5 8"><path d="M1 0.5 L4.5 4 L1 7.5Z" fill="#6a6a6a"/></svg>
<svg style="left:537px;top:698px;" width="5" height="8" viewBox="0 0 5 8"><path d="M1 0.5 L4.5 4 L1 7.5Z" fill="#6a6a6a"/></svg>
<div class="num" style="left:549px;top:692px;width:89px;height:20px;"></div>
<div class="t" style="left:617px;top:696px;">1</div>
<svg style="left:554px;top:698px;" width="5" height="8" viewBox="0 0 5 8"><path d="M4 0.5 L0.5 4 L4 7.5Z" fill="#6a6a6a"/></svg>
<svg style="left:629px;top:698px;" width="5" height="8" viewBox="0 0 5 8"><path d="M1 0.5 L4.5 4 L1 7.5Z" fill="#6a6a6a"/></svg>
<div class="btn" style="left:656px;top:692px;width:118px;height:20px;"></div>
<div class="" style="left:675.7px;top:693px;width:1px;height:18px;background:#262626"></div>
<div class="" style="left:695.4px;top:693px;width:1px;height:18px;background:#262626"></div>
<div class="" style="left:715.1px;top:693px;width:1px;height:18px;background:#262626"></div>
<div class="" style="left:734.8px;top:693px;width:1px;height:18px;background:#262626"></div>
<div class="" style="left:754.5px;top:693px;width:1px;height:18px;background:#262626"></div>
<svg style="left:658.0px;top:694px;" width="16" height="16" viewBox="0 0 16 16"><path d="M2 2v12" stroke="#fff" stroke-width="1.6"/><path d="M9 3 L3 8 L9 13Z M15 3 L9 8 L15 13Z" fill="none" stroke="#111" stroke-width="1"/></svg>
<svg style="left:677.7px;top:694px;" width="16" height="16" viewBox="0 0 16 16"><path d="M9 3 L3 8 L9 13Z M15 3 L9 8 L15 13Z" fill="#ddd" stroke="#111" stroke-width="1"/></svg>
<svg style="left:697.4px;top:694px;" width="16" height="16" viewBox="0 0 16 16"><path d="M12 2 L3 8 L12 14Z" fill="#ddd" stroke="#111" stroke-width="1"/></svg>
<svg style="left:717.1px;top:694px;" width="16" height="16" viewBox="0 0 16 16"><path d="M4 2 L13 8 L4 14Z" fill="#ddd" stroke="#111" stroke-width="1"/></svg>
<svg style="left:736.8px;top:694px;" width="16" height="16" viewBox="0 0 16 16"><path d="M1 3 L7 8 L1 13Z M7 3 L13 8 L7 13Z" fill="#ddd" stroke="#111" stroke-width="1"/></svg>
<svg style="left:756.5px;top:694px;" width="16" height="16" viewBox="0 0 16 16"><path d="M1 3 L7 8 L1 13Z M7 3 L13 8 L7 13Z" fill="#ddd" stroke="#111" stroke-width="1"/><path d="M14 2v12" stroke="#111" stroke-width="1.6"/></svg>
<div class="dd" style="left:781px;top:692px;width:89px;height:20px;"></div>
<div class="t" style="left:790px;top:696px;color:#f0f0f0">同期しない</div>
<svg style="left:859px;top:695px;" width="8" height="14" viewBox="0 0 8 14"><path d="M1 5.5 L4 1 L7 5.5Z M1 8.5 L4 13 L7 8.5Z" fill="#a8a8a8"/></svg>
<div class="btn" style="left:887px;top:692px;width:19px;height:20px;"></div>
<svg style="left:891px;top:697px;" width="11" height="11" viewBox="0 0 11 11"><circle cx="5.5" cy="5.5" r="4.5" fill="#e03010" stroke="#333" stroke-width="0.8"/></svg>
<div class="dd" style="left:912px;top:692px;width:31px;height:20px;"></div>
<svg style="left:916px;top:697px;" width="11" height="11" viewBox="0 0 11 11"><path d="M5.5 0.5 L10.5 5.5 L5.5 10.5 L0.5 5.5Z" fill="#f0a020" stroke="#222" stroke-width="0.8"/></svg>
<svg style="left:932px;top:695px;" width="8" height="14" viewBox="0 0 8 14"><path d="M1 5.5 L4 1 L7 5.5Z M1 8.5 L4 13 L7 8.5Z" fill="#a8a8a8"/></svg>
<div class="" style="left:948px;top:692px;width:171px;height:20px;border:1px solid #2a2a2a;border-radius:4px;background:linear-gradient(#bdbdbd,#a6a6a6);overflow:hidden"></div>
<div class="" style="left:1078px;top:693px;width:40px;height:18px;background:linear-gradient(#a6a6a6,#8e8e8e)"></div>
<div class="" style="left:1078px;top:693px;width:1px;height:18px;background:#262626"></div>
<div class="" style="left:1098px;top:693px;width:1px;height:18px;background:#262626"></div>
<svg style="left:951px;top:694px;" width="16" height="16" viewBox="0 0 16 16"><path d="M4 1 V10 M4 2h3 M4 5h2" stroke="#c8b020" stroke-width="1.6" fill="none"/><circle cx="4" cy="12" r="2.5" fill="none" stroke="#c8b020" stroke-width="1.4"/><g transform="translate(3 0)"><path d="M5.5 10.5 L12 4" stroke="#222" stroke-width="2.6"/><path d="M5.5 10.5 L12 4" stroke="#eee" stroke-width="1.2"/></g></svg>
<svg style="left:1081px;top:694px;" width="16" height="16" viewBox="0 0 16 16"><circle cx="4" cy="12" r="2.6" fill="none" stroke="#222" stroke-width="2.6"/><circle cx="4" cy="12" r="2.6" fill="none" stroke="#eee" stroke-width="1.2"/><path d="M5.5 10.5 L13 3" stroke="#222" stroke-width="2.6"/><path d="M5.5 10.5 L13 3" stroke="#eee" stroke-width="1.2"/></svg>
<svg style="left:1101px;top:694px;" width="16" height="16" viewBox="0 0 16 16"><circle cx="4" cy="12" r="2.6" fill="none" stroke="#222" stroke-width="2.6"/><circle cx="4" cy="12" r="2.6" fill="none" stroke="#eee" stroke-width="1.2"/><path d="M5.5 10.5 L13 3" stroke="#222" stroke-width="2.6"/><path d="M5.5 10.5 L13 3" stroke="#eee" stroke-width="1.2"/><path d="M2 2 L14 14" stroke="#e03030" stroke-width="1.5"/></svg></body></html>
